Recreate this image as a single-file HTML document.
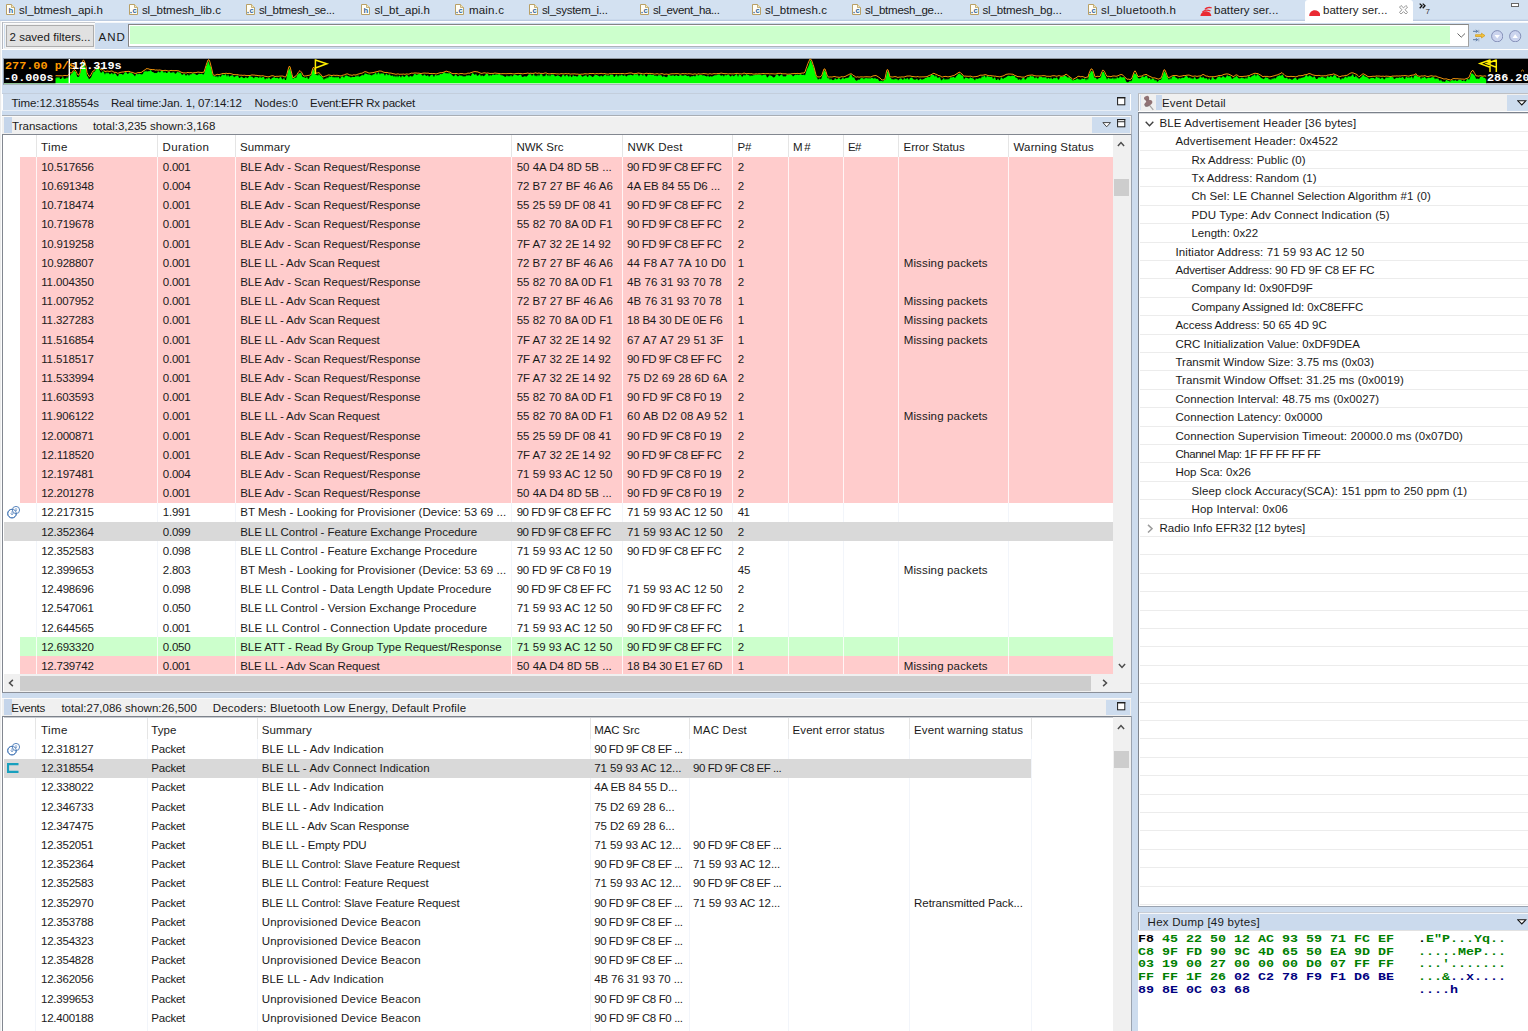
<!DOCTYPE html>
<html><head><meta charset="utf-8"><title>Network Analyzer</title>
<style>
*{box-sizing:border-box;margin:0;padding:0}
html,body{width:1528px;height:1031px;overflow:hidden;background:#cddcee}
body{position:relative;font-family:"Liberation Sans", sans-serif;font-size:11.5px;color:#1a1a1a;line-height:14px}
.a{position:absolute;white-space:nowrap}
.t{position:absolute;white-space:nowrap;height:14px;line-height:14px;letter-spacing:0px}
.row{position:absolute}
.hx{position:absolute;white-space:pre;font-family:"Liberation Mono",monospace;font-weight:bold;font-size:11.8px;line-height:13px;height:13px;transform-origin:0 0;transform:scaleX(1.13)}
.g{color:#008000}.b{color:#000080}.k{color:#000}
.cf{position:absolute;white-space:pre;font-family:"Liberation Mono",monospace;font-weight:bold;font-size:10.2px;line-height:10px;height:10px;transform-origin:0 0;transform:scaleX(1.16)}
</style></head><body>

<div class="a" style="left:0px;top:0px;width:1528px;height:22px;background:#d3e1f1;"></div>
<div class="a" style="left:0px;top:19px;width:1528px;height:1px;background:#cad9ec;"></div>
<div class="a" style="left:0px;top:20px;width:1528px;height:1px;background:#bccbe0;"></div>
<div class="a" style="left:1px;top:21px;width:1527px;height:1px;background:#ffffff;"></div>
<div class="a" style="left:95px;top:22px;width:1433px;height:1px;background:#f4f7fb;"></div>
<div class="a" style="left:1305px;top:0px;width:108px;height:22.5px;background:#ffffff;border-radius:3px 3px 0 0"></div>
<svg class="a" style="left:6.2px;top:4px" width="9" height="11" viewBox="0 0 9 11"><path d="M0.5 0.5H5.5L8.5 3.5V10.5H0.5Z" fill="#fffef6" stroke="#b9a066" stroke-width="1"/><path d="M5.5 0.5V3.5H8.5" fill="#f3e7b8" stroke="#b9a066" stroke-width="0.8"/><text x="2.6" y="9.2" font-family="Liberation Sans, sans-serif" font-size="7.6" font-weight="bold" fill="#2f64a0">h</text></svg>
<div class="t" style="left:18.9px;top:3.20px;letter-spacing:0.018px;">sl_btmesh_api.h</div>
<svg class="a" style="left:129px;top:4px" width="9" height="11" viewBox="0 0 9 11"><path d="M0.5 0.5H5.5L8.5 3.5V10.5H0.5Z" fill="#fffef6" stroke="#b9a066" stroke-width="1"/><path d="M5.5 0.5V3.5H8.5" fill="#f3e7b8" stroke="#b9a066" stroke-width="0.8"/><text x="3.6" y="9.2" font-family="Liberation Sans, sans-serif" font-size="7.6" font-weight="bold" fill="#2f64a0">c</text><rect x="1.4" y="7.9" width="1.3" height="1.3" fill="#2f64a0"/></svg>
<div class="t" style="left:141.9px;top:3.20px;letter-spacing:-0.019px;">sl_btmesh_lib.c</div>
<svg class="a" style="left:246px;top:4px" width="9" height="11" viewBox="0 0 9 11"><path d="M0.5 0.5H5.5L8.5 3.5V10.5H0.5Z" fill="#fffef6" stroke="#b9a066" stroke-width="1"/><path d="M5.5 0.5V3.5H8.5" fill="#f3e7b8" stroke="#b9a066" stroke-width="0.8"/><text x="3.6" y="9.2" font-family="Liberation Sans, sans-serif" font-size="7.6" font-weight="bold" fill="#2f64a0">c</text><rect x="1.4" y="7.9" width="1.3" height="1.3" fill="#2f64a0"/></svg>
<div class="t" style="left:258.9px;top:3.20px;letter-spacing:-0.325px;">sl_btmesh_se...</div>
<svg class="a" style="left:361px;top:4px" width="9" height="11" viewBox="0 0 9 11"><path d="M0.5 0.5H5.5L8.5 3.5V10.5H0.5Z" fill="#fffef6" stroke="#b9a066" stroke-width="1"/><path d="M5.5 0.5V3.5H8.5" fill="#f3e7b8" stroke="#b9a066" stroke-width="0.8"/><text x="2.6" y="9.2" font-family="Liberation Sans, sans-serif" font-size="7.6" font-weight="bold" fill="#2f64a0">h</text></svg>
<div class="t" style="left:374.4px;top:3.20px;letter-spacing:-0.013px;">sl_bt_api.h</div>
<svg class="a" style="left:455px;top:4px" width="9" height="11" viewBox="0 0 9 11"><path d="M0.5 0.5H5.5L8.5 3.5V10.5H0.5Z" fill="#fffef6" stroke="#b9a066" stroke-width="1"/><path d="M5.5 0.5V3.5H8.5" fill="#f3e7b8" stroke="#b9a066" stroke-width="0.8"/><text x="3.6" y="9.2" font-family="Liberation Sans, sans-serif" font-size="7.6" font-weight="bold" fill="#2f64a0">c</text><rect x="1.4" y="7.9" width="1.3" height="1.3" fill="#2f64a0"/></svg>
<div class="t" style="left:468.9px;top:3.20px;letter-spacing:0.225px;">main.c</div>
<svg class="a" style="left:529px;top:4px" width="9" height="11" viewBox="0 0 9 11"><path d="M0.5 0.5H5.5L8.5 3.5V10.5H0.5Z" fill="#fffef6" stroke="#b9a066" stroke-width="1"/><path d="M5.5 0.5V3.5H8.5" fill="#f3e7b8" stroke="#b9a066" stroke-width="0.8"/><text x="3.6" y="9.2" font-family="Liberation Sans, sans-serif" font-size="7.6" font-weight="bold" fill="#2f64a0">c</text><rect x="1.4" y="7.9" width="1.3" height="1.3" fill="#2f64a0"/></svg>
<div class="t" style="left:541.9px;top:3.20px;letter-spacing:-0.282px;">sl_system_i...</div>
<svg class="a" style="left:640px;top:4px" width="9" height="11" viewBox="0 0 9 11"><path d="M0.5 0.5H5.5L8.5 3.5V10.5H0.5Z" fill="#fffef6" stroke="#b9a066" stroke-width="1"/><path d="M5.5 0.5V3.5H8.5" fill="#f3e7b8" stroke="#b9a066" stroke-width="0.8"/><text x="3.6" y="9.2" font-family="Liberation Sans, sans-serif" font-size="7.6" font-weight="bold" fill="#2f64a0">c</text><rect x="1.4" y="7.9" width="1.3" height="1.3" fill="#2f64a0"/></svg>
<div class="t" style="left:652.9px;top:3.20px;letter-spacing:-0.355px;">sl_event_ha...</div>
<svg class="a" style="left:752px;top:4px" width="9" height="11" viewBox="0 0 9 11"><path d="M0.5 0.5H5.5L8.5 3.5V10.5H0.5Z" fill="#fffef6" stroke="#b9a066" stroke-width="1"/><path d="M5.5 0.5V3.5H8.5" fill="#f3e7b8" stroke="#b9a066" stroke-width="0.8"/><text x="3.6" y="9.2" font-family="Liberation Sans, sans-serif" font-size="7.6" font-weight="bold" fill="#2f64a0">c</text><rect x="1.4" y="7.9" width="1.3" height="1.3" fill="#2f64a0"/></svg>
<div class="t" style="left:764.9px;top:3.20px;letter-spacing:0.064px;">sl_btmesh.c</div>
<svg class="a" style="left:851.5px;top:4px" width="9" height="11" viewBox="0 0 9 11"><path d="M0.5 0.5H5.5L8.5 3.5V10.5H0.5Z" fill="#fffef6" stroke="#b9a066" stroke-width="1"/><path d="M5.5 0.5V3.5H8.5" fill="#f3e7b8" stroke="#b9a066" stroke-width="0.8"/><text x="3.6" y="9.2" font-family="Liberation Sans, sans-serif" font-size="7.6" font-weight="bold" fill="#2f64a0">c</text><rect x="1.4" y="7.9" width="1.3" height="1.3" fill="#2f64a0"/></svg>
<div class="t" style="left:864.9px;top:3.20px;letter-spacing:-0.228px;">sl_btmesh_ge...</div>
<svg class="a" style="left:969.5px;top:4px" width="9" height="11" viewBox="0 0 9 11"><path d="M0.5 0.5H5.5L8.5 3.5V10.5H0.5Z" fill="#fffef6" stroke="#b9a066" stroke-width="1"/><path d="M5.5 0.5V3.5H8.5" fill="#f3e7b8" stroke="#b9a066" stroke-width="0.8"/><text x="3.6" y="9.2" font-family="Liberation Sans, sans-serif" font-size="7.6" font-weight="bold" fill="#2f64a0">c</text><rect x="1.4" y="7.9" width="1.3" height="1.3" fill="#2f64a0"/></svg>
<div class="t" style="left:982.4px;top:3.20px;letter-spacing:-0.121px;">sl_btmesh_bg...</div>
<svg class="a" style="left:1087.5px;top:4px" width="9" height="11" viewBox="0 0 9 11"><path d="M0.5 0.5H5.5L8.5 3.5V10.5H0.5Z" fill="#fffef6" stroke="#b9a066" stroke-width="1"/><path d="M5.5 0.5V3.5H8.5" fill="#f3e7b8" stroke="#b9a066" stroke-width="0.8"/><text x="3.6" y="9.2" font-family="Liberation Sans, sans-serif" font-size="7.6" font-weight="bold" fill="#2f64a0">c</text><rect x="1.4" y="7.9" width="1.3" height="1.3" fill="#2f64a0"/></svg>
<div class="t" style="left:1100.9px;top:3.20px;letter-spacing:0.260px;">sl_bluetooth.h</div>
<svg class="a" style="left:1199.6px;top:5.8px" width="12.4" height="10" viewBox="0 0 12.4 10"><path d="M0.3 9.9C1 6.6 3.4 5.1 6.4 5.3 9 5.5 10.9 7.1 11.4 9.9Z" fill="#ea2a33"/><path d="M1.8 5.9C4 3.2 7.6 2.6 10.8 4.5L10.2 5.6C7.6 4.2 5 4.5 2.9 6.4Z" fill="#ea2a33"/><path d="M4.4 3C6.4 0.8 9.6 0.3 12 1.5L11.4 2.6C9.2 1.8 6.9 2.2 5.3 3.8Z" fill="#ea2a33"/></svg>
<div class="t" style="left:1213.9px;top:3.20px;letter-spacing:0.094px;">battery ser...</div>
<svg class="a" style="left:1308.6px;top:9.7px" width="11.6" height="6" viewBox="0 0 11.6 6"><path d="M0.2 5.9C0.3 2.6 2.6 0.3 5.8 0.3 9 0.3 11.3 2.6 11.4 5.9Z" fill="#ea2a33"/></svg>
<div class="t" style="left:1322.9px;top:3.20px;letter-spacing:0.094px;">battery ser...</div>
<svg class="a" style="left:1398.5px;top:5px" width="9" height="9.5" viewBox="0 0 9 9.5"><path d="M0.5 2.1L2.1 0.5 4.5 2.9 6.9 0.5 8.5 2.1 6.1 4.75 8.5 7.4 6.9 9 4.5 6.6 2.1 9 0.5 7.4 2.9 4.75Z" fill="#fff" stroke="#8a8a8a" stroke-width="0.9" stroke-linejoin="round"/></svg>
<svg class="a" style="left:1419px;top:2.5px" width="8" height="6" viewBox="0 0 8 6"><path d="M0.7 0.6L3 2.8 0.7 5.2M3.7 0.6L6 2.8 3.7 5.2" fill="none" stroke="#111" stroke-width="1.3"/></svg>
<div class="a" style="left:1425.6px;top:7px;font-size:8px;line-height:9px;color:#333">7</div>
<div class="a" style="left:1511px;top:3px;width:8px;height:3.6px;border:1px solid #666;background:#fff"></div>
<div class="a" style="left:0px;top:21px;width:1px;height:1010px;background:#ebebeb;"></div>
<div class="a" style="left:1px;top:21px;width:1px;height:1010px;background:#fbfcfd;"></div>
<div class="a" style="left:2px;top:23px;width:1526px;height:26px;background:#cddcee;"></div>
<div class="a" style="left:2px;top:49px;width:1526px;height:1px;background:#fff;"></div>
<div class="a" style="left:2px;top:22px;width:93px;height:27px;background:#f2f2f2;"></div>
<div class="a" style="left:2px;top:22px;width:93px;height:1px;background:#c6c9cf;"></div>
<div class="a" style="left:2px;top:22px;width:1px;height:27px;background:#b4b8c0;"></div>
<div class="a" style="left:3px;top:23px;width:92px;height:1px;background:#fbfbfb;"></div>
<div class="a" style="left:3px;top:23px;width:1px;height:26px;background:#fbfbfb;"></div>
<div class="a" style="left:4px;top:24px;width:1px;height:24px;background:#d0dff0;"></div>
<div class="a" style="left:6px;top:25px;width:88px;height:22px;background:#e1e1e1;border:1px solid #adadad"></div>
<div class="t" style="left:9.5px;top:29.60px;letter-spacing:0.027px;">2 saved filters...</div>
<div class="t" style="left:98.5px;top:29.60px;letter-spacing:0.959px;">AND</div>
<div class="a" style="left:128px;top:23.5px;width:1341px;height:23px;background:#fff;border:1px solid #858585;border-right-color:#a0a0a0;border-bottom-color:#adb3bb"></div>
<div class="a" style="left:130px;top:26.3px;width:1320px;height:17.6px;background:#ccffcc;"></div>
<svg class="a" style="left:1456.5px;top:33px" width="8.5" height="5" viewBox="0 0 8.5 5"><path d="M0.5 0.5L4.25 4.2 8 0.5" fill="none" stroke="#555" stroke-width="0.9"/></svg>
<svg class="a" style="left:1472px;top:29px" width="14" height="14" viewBox="0 0 14 14"><path d="M1 2.3H5.5M4 0.8L5.5 2.3 4 3.8M1 10.7H5.5M4 9.2L5.5 10.7 4 12.2" stroke="#4a6a9a" stroke-width="0.9" fill="none"/><path d="M6.8 0.8V4M6.8 9V12.4" stroke="#9aa8c0" stroke-width="1"/><path d="M3.5 5.7H9.5V4.2L13 6.6 9.5 9V7.5H3.5Z" fill="#f6c23a" stroke="#d09a18" stroke-width="0.7"/></svg>
<svg class="a" style="left:1491px;top:29.7px" width="12.4" height="12.4" viewBox="0 0 12.4 12.4"><circle cx="6.2" cy="6.2" r="5.6" fill="#cbd4ee" stroke="#8590b8" stroke-width="1"/><path d="M3.5 4.9H8.9L6.2 8.6Z" fill="#fff"/></svg>
<svg class="a" style="left:1509.2px;top:29.7px" width="12.4" height="12.4" viewBox="0 0 12.4 12.4"><circle cx="6.2" cy="6.2" r="5.6" fill="#cbd4ee" stroke="#8590b8" stroke-width="1"/><path d="M3.5 7.9H8.9L6.2 4.2Z" fill="#fff"/></svg>
<div class="a" style="left:3px;top:58px;width:1525px;height:27px;background:#000;border:1px solid #8f98a3;border-right:none;border-bottom:1px solid #a9b1bb"></div>
<div class="a" style="left:4px;top:83.2px;width:1524px;height:0.9px;background:#eef2f7"></div>
<svg class="a" style="left:0;top:0" width="1528" height="90" viewBox="0 0 1528 90">
<path d="M4 83.2 L4 77.9 L5 77.6 L6 78.0 L7 77.7 L8 78.7 L9 77.1 L10 78.7 L11 76.5 L12 79.3 L13 77.9 L14 76.4 L15 76.4 L16 76.8 L17 77.4 L18 78.7 L19 77.9 L20 78.0 L21 76.8 L22 79.2 L23 78.1 L24 76.6 L25 76.3 L26 77.0 L27 76.9 L28 78.5 L29 76.5 L30 77.1 L31 76.9 L32 77.6 L33 76.5 L34 76.7 L35 78.0 L36 76.4 L37 76.0 L38 76.2 L39 76.9 L40 77.8 L41 77.5 L42 76.8 L43 76.4 L44 78.2 L45 78.5 L46 76.8 L47 77.7 L48 79.0 L49 76.5 L50 76.7 L51 76.2 L52 77.6 L53 77.7 L54 77.2 L55 77.3 L56 78.7 L57 76.5 L58 78.5 L59 76.6 L60 79.1 L61 79.1 L62 77.9 L63 76.5 L64 79.3 L65 78.3 L66 78.7 L67 77.0 L68 78.4 L69 75.4 L70 76.0 L71 74.0 L72 73.4 L73 72.1 L74 70.5 L75 71.6 L76 72.1 L77 76.6 L78 76.9 L79 76.7 L80 73.7 L81 70.5 L82 67.0 L83 62.8 L84 63.1 L85 67.1 L86 68.8 L87 75.8 L88 76.9 L89 79.3 L90 78.4 L91 77.4 L92 75.2 L93 72.6 L94 71.9 L95 71.2 L96 69.3 L97 68.6 L98 66.6 L99 68.6 L100 71.3 L101 72.9 L102 72.3 L103 70.7 L104 72.4 L105 74.7 L106 72.0 L107 73.7 L108 72.2 L109 73.6 L110 74.4 L111 73.5 L112 72.7 L113 74.8 L114 73.2 L115 73.3 L116 74.2 L117 75.8 L118 76.5 L119 73.7 L120 73.8 L121 73.9 L122 74.0 L123 75.0 L124 73.4 L125 72.2 L126 72.0 L127 73.2 L128 74.2 L129 72.5 L130 72.5 L131 73.2 L132 73.0 L133 74.2 L134 75.1 L135 76.5 L136 73.9 L137 73.8 L138 74.4 L139 73.6 L140 73.9 L141 74.3 L142 74.4 L143 73.7 L144 70.9 L145 72.0 L146 70.3 L147 72.0 L148 70.8 L149 71.6 L150 70.5 L151 70.0 L152 72.1 L153 71.9 L154 72.8 L155 73.2 L156 72.7 L157 73.2 L158 71.3 L159 71.7 L160 72.8 L161 70.9 L162 71.0 L163 71.2 L164 73.2 L165 71.3 L166 73.0 L167 72.9 L168 72.2 L169 71.2 L170 72.3 L171 73.0 L172 72.3 L173 72.4 L174 71.9 L175 73.7 L176 73.5 L177 72.3 L178 71.4 L179 72.7 L180 72.0 L181 73.6 L182 75.1 L183 74.4 L184 73.4 L185 74.2 L186 76.0 L187 74.4 L188 74.2 L189 75.9 L190 73.9 L191 74.8 L192 73.4 L193 73.3 L194 73.6 L195 73.8 L196 74.7 L197 75.1 L198 74.4 L199 73.5 L200 74.1 L201 74.0 L202 73.4 L203 74.7 L204 73.9 L205 70.7 L206 66.2 L207 65.0 L208 60.7 L209 62.8 L210 65.9 L211 66.7 L212 72.6 L213 75.5 L214 76.6 L215 75.7 L216 77.2 L217 75.5 L218 77.7 L219 75.0 L220 76.7 L221 76.4 L222 74.5 L223 74.4 L224 75.4 L225 74.3 L226 74.3 L227 76.9 L228 73.9 L229 76.8 L230 76.3 L231 75.5 L232 75.6 L233 74.9 L234 77.5 L235 76.3 L236 76.2 L237 75.6 L238 75.4 L239 77.7 L240 77.9 L241 76.4 L242 76.7 L243 77.8 L244 78.3 L245 77.8 L246 76.6 L247 78.2 L248 77.8 L249 76.6 L250 75.8 L251 76.8 L252 76.5 L253 77.4 L254 78.6 L255 76.5 L256 77.2 L257 76.7 L258 77.5 L259 77.9 L260 75.9 L261 78.1 L262 77.3 L263 77.0 L264 77.1 L265 79.8 L266 78.3 L267 78.4 L268 78.5 L269 76.9 L270 78.7 L271 79.4 L272 77.8 L273 77.9 L274 76.8 L275 77.7 L276 78.3 L277 77.4 L278 78.2 L279 78.8 L280 76.9 L281 77.0 L282 79.0 L283 79.6 L284 77.2 L285 80.0 L286 80.0 L287 75.4 L288 70.7 L289 69.7 L290 68.0 L291 72.7 L292 74.9 L293 79.3 L294 77.7 L295 77.3 L296 78.2 L297 75.6 L298 74.2 L299 73.0 L300 73.5 L301 72.2 L302 76.1 L303 77.2 L304 77.1 L305 77.8 L306 77.9 L307 76.4 L308 78.9 L309 78.4 L310 75.8 L311 76.3 L312 71.7 L313 68.4 L314 70.0 L315 72.7 L316 75.2 L317 74.5 L318 75.9 L319 73.5 L320 75.8 L321 75.6 L322 76.8 L323 78.0 L324 80.0 L325 78.0 L326 79.1 L327 76.9 L328 78.4 L329 76.0 L330 77.0 L331 76.5 L332 76.1 L333 77.7 L334 76.6 L335 77.9 L336 76.3 L337 78.0 L338 76.3 L339 77.5 L340 79.0 L341 76.9 L342 76.3 L343 76.3 L344 77.9 L345 75.8 L346 75.6 L347 75.4 L348 76.2 L349 76.4 L350 76.7 L351 77.7 L352 76.4 L353 76.9 L354 76.9 L355 77.0 L356 75.2 L357 77.1 L358 74.8 L359 77.2 L360 76.0 L361 76.2 L362 74.4 L363 75.5 L364 74.9 L365 72.9 L366 73.9 L367 73.8 L368 74.8 L369 74.2 L370 74.8 L371 75.2 L372 75.4 L373 74.3 L374 74.4 L375 73.3 L376 72.4 L377 75.0 L378 72.2 L379 72.7 L380 74.7 L381 72.7 L382 74.1 L383 73.0 L384 74.0 L385 75.9 L386 73.6 L387 73.9 L388 75.6 L389 74.2 L390 74.5 L391 76.1 L392 75.5 L393 75.4 L394 77.0 L395 75.3 L396 77.5 L397 75.0 L398 77.5 L399 75.5 L400 76.0 L401 77.8 L402 75.3 L403 76.0 L404 77.1 L405 76.5 L406 75.1 L407 75.2 L408 75.8 L409 77.4 L410 75.6 L411 76.3 L412 76.4 L413 76.2 L414 74.3 L415 73.8 L416 74.6 L417 74.9 L418 73.9 L419 74.3 L420 73.6 L421 73.9 L422 74.9 L423 76.1 L424 74.5 L425 74.6 L426 75.9 L427 75.8 L428 74.9 L429 77.0 L430 75.8 L431 75.0 L432 74.6 L433 75.3 L434 77.3 L435 74.7 L436 74.9 L437 75.7 L438 74.8 L439 75.5 L440 73.9 L441 73.9 L442 74.3 L443 73.3 L444 72.5 L445 72.2 L446 73.7 L447 72.7 L448 73.8 L449 73.1 L450 73.3 L451 73.7 L452 74.9 L453 75.7 L454 76.4 L455 74.8 L456 74.2 L457 76.1 L458 76.4 L459 75.8 L460 75.0 L461 76.1 L462 75.2 L463 76.7 L464 76.1 L465 76.7 L466 75.7 L467 75.3 L468 75.8 L469 74.9 L470 75.8 L471 76.0 L472 73.3 L473 73.2 L474 74.3 L475 75.0 L476 73.6 L477 75.7 L478 75.7 L479 74.7 L480 74.1 L481 76.6 L482 75.1 L483 76.0 L484 76.3 L485 75.1 L486 74.0 L487 73.8 L488 74.0 L489 76.5 L490 74.4 L491 75.8 L492 75.3 L493 73.9 L494 74.9 L495 74.7 L496 74.2 L497 74.4 L498 74.6 L499 74.0 L500 74.2 L501 75.5 L502 74.9 L503 75.8 L504 76.1 L505 77.1 L506 76.5 L507 75.0 L508 76.7 L509 75.4 L510 76.8 L511 74.2 L512 76.8 L513 75.7 L514 74.8 L515 74.3 L516 75.2 L517 75.1 L518 76.1 L519 74.7 L520 75.1 L521 74.3 L522 77.1 L523 76.7 L524 76.4 L525 76.1 L526 76.7 L527 76.3 L528 75.3 L529 74.0 L530 74.6 L531 74.0 L532 76.2 L533 74.6 L534 73.9 L535 76.4 L536 75.0 L537 76.7 L538 74.1 L539 76.4 L540 74.0 L541 74.4 L542 74.0 L543 76.8 L544 75.4 L545 76.4 L546 74.1 L547 74.6 L548 76.5 L549 74.2 L550 76.8 L551 74.2 L552 74.8 L553 74.5 L554 74.7 L555 76.5 L556 76.0 L557 75.8 L558 75.0 L559 76.2 L560 76.1 L561 77.4 L562 75.7 L563 74.5 L564 75.0 L565 76.7 L566 75.0 L567 74.9 L568 75.8 L569 77.1 L570 74.5 L571 76.5 L572 77.2 L573 74.8 L574 76.1 L575 76.2 L576 75.7 L577 76.9 L578 75.7 L579 74.8 L580 74.7 L581 74.9 L582 76.6 L583 76.7 L584 75.6 L585 75.9 L586 74.5 L587 76.4 L588 77.0 L589 74.7 L590 75.6 L591 75.5 L592 76.7 L593 77.1 L594 75.8 L595 74.9 L596 75.1 L597 75.1 L598 75.7 L599 75.9 L600 76.8 L601 74.9 L602 76.3 L603 76.6 L604 75.3 L605 74.8 L606 74.4 L607 76.4 L608 74.6 L609 76.4 L610 74.8 L611 74.5 L612 74.9 L613 74.4 L614 77.3 L615 76.2 L616 74.7 L617 74.7 L618 77.0 L619 74.9 L620 75.7 L621 75.0 L622 74.2 L623 76.0 L624 75.6 L625 75.1 L626 76.5 L627 76.2 L628 74.8 L629 75.4 L630 74.4 L631 75.1 L632 75.0 L633 75.8 L634 74.3 L635 74.1 L636 74.7 L637 74.0 L638 74.4 L639 76.6 L640 74.4 L641 74.2 L642 74.7 L643 75.9 L644 74.1 L645 74.9 L646 76.7 L647 76.3 L648 74.3 L649 74.7 L650 74.5 L651 74.4 L652 75.3 L653 74.6 L654 74.9 L655 76.2 L656 74.9 L657 76.4 L658 75.4 L659 75.0 L660 75.4 L661 74.7 L662 76.3 L663 76.9 L664 75.2 L665 77.3 L666 76.5 L667 77.5 L668 75.1 L669 74.8 L670 75.5 L671 75.4 L672 75.8 L673 74.9 L674 75.7 L675 76.3 L676 74.7 L677 75.5 L678 76.0 L679 75.9 L680 74.6 L681 75.3 L682 75.4 L683 75.7 L684 75.6 L685 75.0 L686 75.3 L687 75.9 L688 76.3 L689 75.6 L690 77.4 L691 75.9 L692 76.6 L693 76.1 L694 75.4 L695 76.8 L696 75.3 L697 74.5 L698 75.7 L699 75.2 L700 74.7 L701 74.9 L702 74.9 L703 75.7 L704 74.9 L705 76.1 L706 76.0 L707 76.7 L708 75.1 L709 76.9 L710 76.3 L711 76.2 L712 76.7 L713 75.9 L714 75.7 L715 74.9 L716 75.6 L717 74.8 L718 74.6 L719 74.5 L720 74.4 L721 76.1 L722 75.3 L723 75.3 L724 76.7 L725 74.3 L726 75.4 L727 75.0 L728 74.7 L729 74.8 L730 76.2 L731 76.5 L732 75.1 L733 75.7 L734 76.4 L735 74.9 L736 74.5 L737 74.1 L738 76.9 L739 74.3 L740 75.0 L741 74.9 L742 77.1 L743 76.0 L744 74.2 L745 76.1 L746 74.3 L747 74.2 L748 75.3 L749 74.8 L750 76.6 L751 75.1 L752 76.3 L753 75.1 L754 75.6 L755 74.5 L756 74.4 L757 74.8 L758 74.5 L759 74.4 L760 74.6 L761 74.9 L762 75.5 L763 74.9 L764 74.5 L765 75.0 L766 74.7 L767 77.4 L768 76.9 L769 75.4 L770 75.3 L771 75.8 L772 76.0 L773 77.2 L774 77.4 L775 76.7 L776 74.7 L777 74.6 L778 74.4 L779 76.4 L780 75.5 L781 74.7 L782 74.3 L783 76.5 L784 76.2 L785 76.5 L786 76.3 L787 74.3 L788 75.0 L789 74.6 L790 74.2 L791 74.5 L792 74.9 L793 76.4 L794 75.7 L795 74.6 L796 74.7 L797 74.7 L798 74.4 L799 75.3 L800 74.3 L801 74.2 L802 74.9 L803 75.1 L804 74.6 L805 75.5 L806 72.3 L807 69.0 L808 67.3 L809 64.8 L810 60.8 L811 60.2 L812 63.8 L813 65.4 L814 68.6 L815 71.6 L816 76.1 L817 77.5 L818 79.7 L819 78.8 L820 78.6 L821 79.5 L822 76.4 L823 73.1 L824 69.9 L825 70.9 L826 72.2 L827 76.4 L828 78.7 L829 77.5 L830 80.3 L831 77.9 L832 80.3 L833 79.8 L834 80.3 L835 77.7 L836 78.9 L837 79.6 L838 78.5 L839 77.4 L840 79.2 L841 79.5 L842 78.6 L843 77.6 L844 78.9 L845 78.6 L846 77.8 L847 78.3 L848 77.6 L849 77.5 L850 74.5 L851 74.5 L852 75.7 L853 78.1 L854 76.8 L855 79.6 L856 80.5 L857 80.8 L858 79.4 L859 79.7 L860 79.4 L861 77.7 L862 78.2 L863 78.1 L864 79.4 L865 77.7 L866 78.5 L867 77.6 L868 78.9 L869 77.6 L870 79.1 L871 77.8 L872 77.8 L873 78.3 L874 78.8 L875 77.4 L876 79.0 L877 78.7 L878 79.0 L879 80.7 L880 81.3 L881 80.6 L882 81.1 L883 81.6 L884 80.1 L885 79.9 L886 77.1 L887 72.2 L888 70.8 L889 73.8 L890 77.7 L891 78.0 L892 79.8 L893 78.7 L894 80.1 L895 78.3 L896 79.5 L897 78.4 L898 80.6 L899 79.4 L900 78.6 L901 78.3 L902 79.0 L903 80.2 L904 77.9 L905 78.5 L906 79.6 L907 77.7 L908 78.5 L909 79.9 L910 77.7 L911 77.9 L912 77.3 L913 78.9 L914 79.4 L915 79.7 L916 79.6 L917 78.6 L918 80.0 L919 80.2 L920 78.4 L921 79.0 L922 79.9 L923 79.0 L924 79.2 L925 78.0 L926 78.0 L927 77.5 L928 76.8 L929 77.3 L930 76.9 L931 75.3 L932 74.6 L933 74.9 L934 75.1 L935 77.0 L936 74.7 L937 77.6 L938 77.8 L939 77.6 L940 77.0 L941 80.3 L942 80.3 L943 78.7 L944 78.1 L945 80.2 L946 78.6 L947 79.9 L948 78.6 L949 79.7 L950 77.6 L951 77.2 L952 77.5 L953 77.1 L954 77.1 L955 78.2 L956 76.4 L957 75.4 L958 74.0 L959 73.8 L960 73.4 L961 75.0 L962 75.6 L963 75.7 L964 79.4 L965 78.1 L966 77.3 L967 78.3 L968 78.1 L969 79.0 L970 77.2 L971 77.7 L972 78.2 L973 78.2 L974 79.2 L975 80.4 L976 77.9 L977 79.3 L978 78.4 L979 78.6 L980 77.8 L981 78.7 L982 75.8 L983 77.5 L984 75.3 L985 75.9 L986 78.0 L987 75.4 L988 76.6 L989 76.7 L990 77.1 L991 77.0 L992 76.6 L993 79.0 L994 78.1 L995 77.1 L996 79.9 L997 79.9 L998 78.3 L999 79.9 L1000 80.2 L1001 77.3 L1002 77.7 L1003 79.2 L1004 77.9 L1005 77.8 L1006 77.3 L1007 76.6 L1008 75.8 L1009 75.7 L1010 76.1 L1011 76.2 L1012 75.4 L1013 75.7 L1014 75.8 L1015 76.2 L1016 78.3 L1017 77.4 L1018 79.8 L1019 79.4 L1020 79.0 L1021 80.4 L1022 78.5 L1023 77.9 L1024 77.6 L1025 79.9 L1026 78.9 L1027 77.9 L1028 76.4 L1029 77.8 L1030 75.4 L1031 75.8 L1032 76.8 L1033 75.8 L1034 77.2 L1035 78.6 L1036 76.8 L1037 78.1 L1038 78.8 L1039 76.9 L1040 76.6 L1041 77.0 L1042 77.0 L1043 77.7 L1044 77.1 L1045 77.8 L1046 76.8 L1047 79.0 L1048 77.9 L1049 77.8 L1050 79.3 L1051 77.1 L1052 79.3 L1053 78.7 L1054 77.6 L1055 78.5 L1056 77.8 L1057 77.3 L1058 79.4 L1059 79.4 L1060 76.7 L1061 76.7 L1062 76.8 L1063 76.7 L1064 75.8 L1065 75.3 L1066 76.2 L1067 76.8 L1068 78.0 L1069 76.7 L1070 77.7 L1071 79.0 L1072 79.4 L1073 80.8 L1074 79.4 L1075 80.1 L1076 79.6 L1077 78.3 L1078 79.0 L1079 79.5 L1080 79.5 L1081 79.7 L1082 78.3 L1083 79.1 L1084 79.0 L1085 77.8 L1086 80.7 L1087 78.0 L1088 80.3 L1089 74.3 L1090 73.4 L1091 70.8 L1092 71.6 L1093 71.6 L1094 77.1 L1095 77.9 L1096 78.0 L1097 79.4 L1098 78.7 L1099 77.9 L1100 78.0 L1101 77.1 L1102 72.7 L1103 72.0 L1104 72.1 L1105 75.0 L1106 76.8 L1107 79.8 L1108 77.7 L1109 77.9 L1110 78.9 L1111 78.3 L1112 79.0 L1113 77.3 L1114 79.8 L1115 77.5 L1116 79.6 L1117 76.8 L1118 78.3 L1119 78.0 L1120 76.0 L1121 77.1 L1122 77.6 L1123 77.3 L1124 77.1 L1125 78.1 L1126 81.2 L1127 82.2 L1128 82.2 L1129 81.8 L1130 80.4 L1131 81.5 L1132 80.1 L1133 76.0 L1134 72.7 L1135 74.2 L1136 73.5 L1137 75.4 L1138 77.9 L1139 78.5 L1140 78.3 L1141 77.8 L1142 76.4 L1143 76.0 L1144 77.6 L1145 76.4 L1146 75.5 L1147 75.9 L1148 78.8 L1149 77.9 L1150 77.9 L1151 80.2 L1152 77.9 L1153 79.1 L1154 78.8 L1155 80.9 L1156 79.2 L1157 81.8 L1158 81.6 L1159 80.0 L1160 80.0 L1161 79.7 L1162 77.2 L1163 74.7 L1164 71.2 L1165 71.9 L1166 74.1 L1167 76.3 L1168 78.1 L1169 79.9 L1170 77.4 L1171 79.8 L1172 76.8 L1173 76.6 L1174 76.1 L1175 76.4 L1176 77.9 L1177 77.8 L1178 79.4 L1179 77.8 L1180 78.4 L1181 78.4 L1182 77.8 L1183 77.7 L1184 77.9 L1185 76.6 L1186 75.9 L1187 75.9 L1188 77.5 L1189 78.2 L1190 76.9 L1191 79.1 L1192 77.7 L1193 79.4 L1194 77.6 L1195 77.1 L1196 78.9 L1197 79.2 L1198 78.6 L1199 78.5 L1200 76.5 L1201 76.5 L1202 78.3 L1203 76.5 L1204 77.8 L1205 78.7 L1206 78.0 L1207 78.5 L1208 80.1 L1209 78.1 L1210 79.2 L1211 80.2 L1212 77.3 L1213 77.1 L1214 79.0 L1215 79.3 L1216 79.4 L1217 77.7 L1218 77.1 L1219 76.6 L1220 76.6 L1221 78.0 L1222 76.9 L1223 75.9 L1224 76.8 L1225 77.7 L1226 77.3 L1227 74.9 L1228 75.7 L1229 76.5 L1230 75.6 L1231 76.9 L1232 79.0 L1233 78.4 L1234 77.2 L1235 77.6 L1236 76.3 L1237 76.1 L1238 77.7 L1239 78.5 L1240 78.2 L1241 78.2 L1242 77.2 L1243 78.6 L1244 78.1 L1245 79.3 L1246 76.9 L1247 79.3 L1248 76.5 L1249 76.1 L1250 77.2 L1251 77.2 L1252 75.4 L1253 75.9 L1254 74.7 L1255 73.9 L1256 76.7 L1257 74.0 L1258 74.8 L1259 75.8 L1260 76.4 L1261 78.1 L1262 78.3 L1263 78.8 L1264 79.2 L1265 77.4 L1266 77.3 L1267 78.1 L1268 77.4 L1269 79.7 L1270 78.7 L1271 80.2 L1272 77.9 L1273 79.4 L1274 77.5 L1275 78.8 L1276 78.1 L1277 76.6 L1278 76.2 L1279 75.4 L1280 75.2 L1281 75.9 L1282 74.4 L1283 75.1 L1284 77.5 L1285 77.9 L1286 78.3 L1287 77.2 L1288 79.6 L1289 78.6 L1290 78.7 L1291 79.2 L1292 80.1 L1293 79.2 L1294 78.3 L1295 78.0 L1296 77.7 L1297 80.1 L1298 79.5 L1299 78.1 L1300 78.8 L1301 77.7 L1302 78.1 L1303 77.3 L1304 77.4 L1305 76.5 L1306 75.1 L1307 75.3 L1308 77.1 L1309 75.4 L1310 75.5 L1311 76.3 L1312 76.8 L1313 77.7 L1314 76.1 L1315 77.0 L1316 79.0 L1317 78.9 L1318 78.2 L1319 76.8 L1320 78.1 L1321 77.1 L1322 77.1 L1323 76.5 L1324 78.2 L1325 77.2 L1326 79.1 L1327 76.4 L1328 76.0 L1329 77.6 L1330 76.5 L1331 75.2 L1332 77.3 L1333 76.5 L1334 75.1 L1335 75.2 L1336 76.0 L1337 78.1 L1338 77.8 L1339 77.2 L1340 78.8 L1341 79.9 L1342 77.8 L1343 78.9 L1344 78.1 L1345 76.9 L1346 76.3 L1347 78.2 L1348 76.0 L1349 76.7 L1350 76.2 L1351 76.4 L1352 75.0 L1353 73.9 L1354 77.1 L1355 76.9 L1356 75.1 L1357 77.7 L1358 77.2 L1359 79.3 L1360 77.8 L1361 77.4 L1362 76.0 L1363 75.1 L1364 75.1 L1365 77.0 L1366 76.2 L1367 77.6 L1368 77.6 L1369 79.0 L1370 78.6 L1371 78.0 L1372 77.7 L1373 77.9 L1374 78.0 L1375 79.3 L1376 76.7 L1377 76.7 L1378 78.2 L1379 76.9 L1380 78.9 L1381 78.4 L1382 77.6 L1383 77.9 L1384 79.6 L1385 78.9 L1386 77.0 L1387 77.9 L1388 77.2 L1389 77.8 L1390 76.7 L1391 76.6 L1392 77.4 L1393 76.7 L1394 79.3 L1395 78.7 L1396 78.0 L1397 77.6 L1398 78.3 L1399 77.6 L1400 77.3 L1401 78.2 L1402 76.9 L1403 76.9 L1404 78.6 L1405 79.3 L1406 76.6 L1407 76.9 L1408 78.3 L1409 76.4 L1410 78.5 L1411 76.6 L1412 76.5 L1413 78.9 L1414 76.2 L1415 75.1 L1416 75.6 L1417 75.8 L1418 76.9 L1419 76.9 L1420 76.8 L1421 79.4 L1422 77.1 L1423 78.3 L1424 76.9 L1425 77.1 L1426 78.4 L1427 78.4 L1428 77.4 L1429 77.8 L1430 77.8 L1431 77.9 L1432 76.7 L1433 77.5 L1434 77.0 L1435 79.4 L1436 77.9 L1437 79.3 L1438 78.1 L1439 80.1 L1440 81.1 L1441 79.4 L1442 81.6 L1443 81.4 L1444 81.5 L1445 82.0 L1446 80.1 L1447 80.1 L1448 81.0 L1449 80.4 L1450 82.0 L1451 80.2 L1452 80.4 L1453 79.7 L1454 81.2 L1455 79.8 L1456 80.4 L1457 81.0 L1458 80.4 L1459 79.6 L1460 79.9 L1461 79.6 L1462 81.0 L1463 80.9 L1464 79.8 L1465 81.5 L1466 81.1 L1467 78.9 L1468 79.0 L1469 80.0 L1470 77.8 L1471 73.7 L1472 73.3 L1473 74.1 L1474 75.1 L1475 75.9 L1476 78.8 L1477 78.7 L1478 78.6 L1479 79.2 L1480 77.2 L1481 76.6 L1482 76.6 L1483 77.1 L1484 78.1 L1485 77.7 L1486 79.7 L1487 77.5 L1487 83.2 Z" fill="#00ff00"/>
<path d="M4 76.0 L5 76.3 L6 76.1 L7 75.8 L8 75.9 L9 75.6 L10 75.4 L11 75.8 L12 76.2 L13 76.1 L14 75.7 L15 75.7 L16 75.5 L17 75.3 L18 75.4 L19 75.6 L20 75.6 L21 75.6 L22 76.0 L23 76.1 L24 75.7 L25 75.5 L26 75.7 L27 75.9 L28 76.0 L29 75.4 L30 75.7 L31 76.0 L32 75.4 L33 75.6 L34 75.2 L35 75.6 L36 75.2 L37 75.0 L38 75.4 L39 75.4 L40 75.1 L41 74.9 L42 74.9 L43 74.9 L44 75.5 L45 75.3 L46 75.2 L47 75.6 L48 75.2 L49 75.2 L50 75.6 L51 75.4 L52 75.2 L53 75.2 L54 75.3 L55 75.8 L56 75.8 L57 75.5 L58 75.9 L59 75.6 L60 75.9 L61 75.6 L62 76.0 L63 75.8 L64 75.5 L65 75.5 L66 75.5 L67 75.8 L68 75.6 L69 74.0 L70 72.8 L71 72.9 L72 72.8 L73 70.8 L74 69.7 L75 69.9 L76 71.2 L77 73.3 L78 75.0 L79 74.9 L80 72.9 L81 66.8 L82 63.5 L83 60.2 L84 60.4 L85 63.2 L86 66.5 L87 72.5 L88 74.6 L89 76.4 L90 76.1 L91 74.6 L92 72.6 L93 70.9 L94 70.8 L95 69.3 L96 66.9 L97 65.8 L98 65.5 L99 67.0 L100 68.5 L101 70.0 L102 69.8 L103 69.4 L104 70.7 L105 71.6 L106 71.3 L107 71.2 L108 71.0 L109 71.5 L110 71.3 L111 71.1 L112 70.9 L113 71.6 L114 72.2 L115 72.4 L116 72.3 L117 73.0 L118 73.3 L119 72.8 L120 72.6 L121 72.2 L122 72.2 L123 71.9 L124 72.1 L125 71.4 L126 71.6 L127 71.5 L128 71.4 L129 71.3 L130 71.7 L131 72.3 L132 72.2 L133 72.6 L134 73.0 L135 73.4 L136 73.3 L137 73.0 L138 72.5 L139 72.7 L140 72.4 L141 72.6 L142 71.9 L143 71.0 L144 70.5 L145 69.9 L146 68.7 L147 68.8 L148 68.7 L149 69.1 L150 69.4 L151 69.4 L152 69.6 L153 69.7 L154 69.5 L155 70.1 L156 70.1 L157 69.9 L158 70.3 L159 69.9 L160 70.1 L161 70.2 L162 70.5 L163 70.7 L164 70.5 L165 70.3 L166 70.4 L167 70.7 L168 70.9 L169 71.1 L170 70.6 L171 70.4 L172 70.5 L173 70.8 L174 70.5 L175 70.8 L176 70.4 L177 70.8 L178 70.7 L179 71.1 L180 71.5 L181 72.2 L182 72.4 L183 72.8 L184 72.9 L185 72.8 L186 73.1 L187 72.7 L188 72.4 L189 72.8 L190 72.7 L191 72.5 L192 72.9 L193 73.0 L194 72.6 L195 72.7 L196 72.6 L197 72.3 L198 72.1 L199 72.2 L200 72.4 L201 72.4 L202 72.5 L203 72.3 L204 72.1 L205 68.8 L206 65.6 L207 62.5 L208 60.0 L209 59.7 L210 62.2 L211 66.1 L212 70.0 L213 74.6 L214 75.3 L215 75.2 L216 74.9 L217 74.3 L218 74.4 L219 74.6 L220 74.3 L221 74.1 L222 73.7 L223 73.4 L224 73.5 L225 73.5 L226 73.2 L227 73.4 L228 73.6 L229 73.3 L230 73.5 L231 73.7 L232 74.0 L233 74.3 L234 74.7 L235 74.5 L236 74.8 L237 74.6 L238 74.7 L239 75.1 L240 75.2 L241 75.2 L242 75.2 L243 75.5 L244 75.1 L245 75.3 L246 75.5 L247 75.6 L248 75.5 L249 75.5 L250 75.5 L251 75.2 L252 74.9 L253 75.1 L254 75.0 L255 75.2 L256 75.4 L257 75.3 L258 75.7 L259 75.6 L260 75.8 L261 75.9 L262 75.8 L263 75.7 L264 76.1 L265 76.3 L266 76.4 L267 76.7 L268 76.8 L269 76.7 L270 76.4 L271 75.9 L272 75.8 L273 75.7 L274 76.1 L275 76.5 L276 76.4 L277 76.2 L278 76.4 L279 76.2 L280 76.1 L281 76.1 L282 76.0 L283 76.1 L284 76.6 L285 77.0 L286 76.7 L287 73.6 L288 70.0 L289 66.5 L290 66.6 L291 70.3 L292 74.5 L293 78.0 L294 77.0 L295 76.5 L296 75.8 L297 74.5 L298 72.8 L299 71.4 L300 70.6 L301 71.7 L302 72.9 L303 75.2 L304 76.0 L305 76.0 L306 75.8 L307 75.8 L308 75.3 L309 75.5 L310 74.9 L311 74.6 L312 70.9 L313 67.7 L314 67.3 L315 70.4 L316 73.3 L317 72.9 L318 73.0 L319 72.4 L320 73.8 L321 74.9 L322 75.8 L323 77.0 L324 76.7 L325 76.1 L326 76.0 L327 75.6 L328 75.0 L329 74.9 L330 75.2 L331 75.4 L332 75.6 L333 75.3 L334 75.1 L335 75.5 L336 75.3 L337 75.3 L338 75.4 L339 75.6 L340 75.9 L341 75.9 L342 75.6 L343 75.0 L344 75.1 L345 74.5 L346 74.1 L347 73.9 L348 74.0 L349 74.6 L350 75.1 L351 74.9 L352 75.5 L353 74.9 L354 74.8 L355 75.0 L356 74.9 L357 74.6 L358 74.0 L359 74.0 L360 73.5 L361 73.2 L362 73.3 L363 72.6 L364 72.1 L365 71.6 L366 71.9 L367 72.1 L368 72.6 L369 73.1 L370 73.0 L371 72.9 L372 72.7 L373 72.7 L374 72.3 L375 72.2 L376 71.8 L377 71.7 L378 71.4 L379 71.0 L380 71.0 L381 71.1 L382 71.3 L383 72.1 L384 72.1 L385 72.6 L386 72.4 L387 72.5 L388 72.7 L389 73.1 L390 73.0 L391 73.1 L392 73.3 L393 73.8 L394 73.7 L395 74.2 L396 74.2 L397 74.1 L398 73.8 L399 74.2 L400 74.3 L401 74.1 L402 74.3 L403 74.0 L404 74.1 L405 74.4 L406 74.0 L407 73.9 L408 74.2 L409 74.1 L410 73.7 L411 73.3 L412 73.0 L413 73.4 L414 72.9 L415 73.1 L416 72.9 L417 73.2 L418 73.1 L419 73.2 L420 73.4 L421 73.5 L422 73.4 L423 73.1 L424 73.1 L425 73.0 L426 73.2 L427 73.2 L428 73.1 L429 73.3 L430 73.7 L431 73.3 L432 73.6 L433 73.7 L434 73.4 L435 73.8 L436 73.9 L437 73.8 L438 73.3 L439 73.1 L440 72.7 L441 72.7 L442 72.7 L443 72.4 L444 72.2 L445 71.5 L446 71.3 L447 71.1 L448 71.9 L449 71.9 L450 72.2 L451 72.7 L452 73.6 L453 73.5 L454 73.7 L455 73.6 L456 73.5 L457 73.5 L458 74.0 L459 74.0 L460 73.5 L461 73.6 L462 73.5 L463 73.7 L464 74.1 L465 73.8 L466 74.0 L467 73.5 L468 73.0 L469 73.3 L470 73.1 L471 72.5 L472 72.4 L473 71.9 L474 71.8 L475 71.5 L476 71.8 L477 71.8 L478 72.0 L479 72.5 L480 72.9 L481 73.3 L482 73.4 L483 73.0 L484 72.9 L485 72.8 L486 73.2 L487 73.2 L488 72.9 L489 73.4 L490 73.4 L491 73.5 L492 73.3 L493 73.5 L494 73.2 L495 73.0 L496 73.2 L497 73.3 L498 73.4 L499 73.5 L500 73.6 L501 73.9 L502 73.6 L503 73.6 L504 73.7 L505 73.6 L506 73.8 L507 73.6 L508 73.6 L509 73.6 L510 73.5 L511 73.4 L512 73.7 L513 73.8 L514 73.9 L515 73.8 L516 73.5 L517 73.6 L518 73.3 L519 73.5 L520 73.5 L521 73.4 L522 73.8 L523 73.8 L524 73.6 L525 73.4 L526 73.5 L527 73.2 L528 73.0 L529 73.5 L530 73.3 L531 73.2 L532 73.5 L533 73.3 L534 73.4 L535 72.9 L536 72.9 L537 73.4 L538 73.2 L539 73.0 L540 73.3 L541 73.5 L542 73.3 L543 73.6 L544 73.2 L545 73.0 L546 72.9 L547 73.3 L548 73.7 L549 73.8 L550 73.8 L551 73.6 L552 73.4 L553 73.7 L554 73.5 L555 73.7 L556 73.7 L557 74.0 L558 73.7 L559 74.1 L560 73.9 L561 73.6 L562 73.7 L563 73.8 L564 73.9 L565 73.7 L566 73.5 L567 73.9 L568 73.7 L569 73.6 L570 74.1 L571 74.0 L572 73.9 L573 73.9 L574 73.9 L575 73.8 L576 74.1 L577 74.0 L578 74.1 L579 74.3 L580 74.3 L581 74.2 L582 74.0 L583 74.2 L584 73.8 L585 73.7 L586 73.8 L587 73.9 L588 74.0 L589 73.7 L590 73.4 L591 73.6 L592 73.6 L593 73.4 L594 73.7 L595 74.0 L596 73.7 L597 73.5 L598 73.8 L599 73.7 L600 73.5 L601 73.4 L602 73.4 L603 73.9 L604 73.5 L605 73.6 L606 74.0 L607 73.9 L608 74.2 L609 73.9 L610 73.5 L611 73.9 L612 73.7 L613 73.6 L614 73.3 L615 73.7 L616 73.5 L617 73.6 L618 73.6 L619 73.5 L620 73.9 L621 73.4 L622 73.6 L623 73.4 L624 73.8 L625 73.9 L626 73.6 L627 73.5 L628 73.3 L629 73.1 L630 73.0 L631 73.0 L632 73.1 L633 73.6 L634 73.8 L635 73.5 L636 73.6 L637 73.3 L638 73.1 L639 73.1 L640 73.4 L641 73.3 L642 73.7 L643 73.8 L644 73.9 L645 73.6 L646 73.3 L647 73.3 L648 73.5 L649 73.5 L650 73.3 L651 73.6 L652 73.6 L653 73.7 L654 74.0 L655 74.1 L656 73.8 L657 73.7 L658 73.8 L659 74.2 L660 74.0 L661 73.8 L662 73.6 L663 73.9 L664 74.3 L665 74.3 L666 74.0 L667 74.1 L668 74.4 L669 74.3 L670 74.1 L671 73.8 L672 73.8 L673 73.7 L674 73.8 L675 73.7 L676 73.6 L677 73.7 L678 73.6 L679 73.9 L680 74.1 L681 74.0 L682 73.7 L683 73.5 L684 73.8 L685 73.8 L686 73.5 L687 74.0 L688 73.8 L689 73.6 L690 73.9 L691 73.8 L692 74.2 L693 74.2 L694 74.0 L695 73.8 L696 74.1 L697 74.3 L698 73.8 L699 73.7 L700 74.2 L701 73.8 L702 74.0 L703 73.5 L704 73.6 L705 73.7 L706 73.8 L707 73.9 L708 74.2 L709 73.9 L710 73.7 L711 73.9 L712 74.2 L713 73.7 L714 73.7 L715 73.6 L716 73.9 L717 73.6 L718 73.5 L719 73.6 L720 73.3 L721 73.2 L722 73.1 L723 73.6 L724 73.4 L725 73.8 L726 73.5 L727 73.8 L728 73.9 L729 73.9 L730 73.6 L731 73.9 L732 73.8 L733 73.8 L734 73.9 L735 73.5 L736 73.6 L737 73.3 L738 73.5 L739 73.8 L740 73.8 L741 73.8 L742 74.0 L743 73.4 L744 73.2 L745 73.2 L746 73.8 L747 73.6 L748 73.6 L749 73.5 L750 73.8 L751 73.6 L752 73.7 L753 74.1 L754 74.0 L755 74.1 L756 73.7 L757 74.0 L758 73.9 L759 73.7 L760 73.8 L761 73.9 L762 73.6 L763 73.6 L764 73.4 L765 73.9 L766 73.6 L767 73.7 L768 73.6 L769 73.7 L770 74.0 L771 73.6 L772 73.9 L773 73.7 L774 74.0 L775 73.9 L776 74.0 L777 73.5 L778 73.4 L779 73.4 L780 73.4 L781 73.2 L782 73.8 L783 73.7 L784 73.9 L785 73.7 L786 73.9 L787 74.1 L788 74.2 L789 74.0 L790 74.1 L791 73.9 L792 73.6 L793 73.7 L794 73.5 L795 73.4 L796 73.7 L797 73.3 L798 73.5 L799 73.6 L800 73.6 L801 73.2 L802 73.2 L803 72.9 L804 73.1 L805 71.9 L806 68.9 L807 66.1 L808 63.3 L809 61.1 L810 59.0 L811 59.3 L812 61.3 L813 64.4 L814 67.2 L815 71.1 L816 74.9 L817 76.8 L818 76.8 L819 77.0 L820 76.8 L821 76.4 L822 74.9 L823 71.7 L824 68.9 L825 69.0 L826 71.6 L827 75.0 L828 76.8 L829 77.1 L830 76.9 L831 77.0 L832 77.0 L833 76.8 L834 76.5 L835 76.6 L836 76.9 L837 77.1 L838 77.1 L839 77.3 L840 77.3 L841 76.8 L842 76.7 L843 77.0 L844 76.7 L845 76.4 L846 76.1 L847 75.3 L848 75.1 L849 74.4 L850 74.0 L851 73.8 L852 74.1 L853 75.3 L854 75.7 L855 76.4 L856 77.3 L857 76.9 L858 76.8 L859 77.3 L860 76.9 L861 76.9 L862 76.9 L863 77.0 L864 77.0 L865 76.7 L866 76.9 L867 76.6 L868 77.0 L869 76.7 L870 77.1 L871 76.9 L872 76.4 L873 75.9 L874 75.8 L875 75.6 L876 75.5 L877 76.1 L878 76.7 L879 77.4 L880 78.0 L881 79.0 L882 80.0 L883 79.9 L884 79.6 L885 78.8 L886 73.6 L887 69.7 L888 69.8 L889 73.0 L890 77.0 L891 76.8 L892 77.0 L893 77.0 L894 76.7 L895 76.6 L896 76.7 L897 77.1 L898 77.5 L899 77.0 L900 77.2 L901 77.0 L902 76.9 L903 77.0 L904 77.0 L905 76.7 L906 76.4 L907 76.0 L908 76.1 L909 76.0 L910 76.0 L911 76.1 L912 76.6 L913 76.4 L914 76.8 L915 76.7 L916 77.0 L917 76.7 L918 76.5 L919 77.1 L920 76.8 L921 77.0 L922 76.8 L923 76.9 L924 76.8 L925 76.8 L926 76.7 L927 76.6 L928 76.1 L929 75.5 L930 75.2 L931 74.8 L932 74.2 L933 73.6 L934 73.2 L935 73.9 L936 74.3 L937 74.5 L938 75.4 L939 75.6 L940 75.8 L941 76.4 L942 77.2 L943 76.8 L944 76.6 L945 76.4 L946 76.4 L947 76.7 L948 76.9 L949 76.7 L950 76.4 L951 76.4 L952 75.9 L953 75.7 L954 75.5 L955 74.9 L956 74.1 L957 73.7 L958 72.9 L959 72.3 L960 72.2 L961 73.4 L962 73.9 L963 75.3 L964 76.2 L965 76.1 L966 76.1 L967 76.3 L968 76.2 L969 76.4 L970 76.1 L971 76.2 L972 76.7 L973 77.0 L974 76.8 L975 76.6 L976 76.7 L977 76.3 L978 76.3 L979 75.7 L980 75.2 L981 75.2 L982 75.2 L983 75.2 L984 74.9 L985 74.7 L986 74.7 L987 75.2 L988 75.5 L989 75.7 L990 75.8 L991 75.5 L992 76.0 L993 75.8 L994 76.2 L995 76.1 L996 76.2 L997 76.6 L998 76.5 L999 76.8 L1000 76.8 L1001 76.5 L1002 76.2 L1003 76.0 L1004 75.5 L1005 75.0 L1006 74.4 L1007 74.2 L1008 74.1 L1009 73.9 L1010 74.1 L1011 74.0 L1012 74.3 L1013 74.1 L1014 75.0 L1015 75.5 L1016 75.7 L1017 76.4 L1018 76.6 L1019 76.7 L1020 76.7 L1021 76.9 L1022 77.2 L1023 77.0 L1024 77.2 L1025 76.9 L1026 76.1 L1027 75.9 L1028 75.4 L1029 75.4 L1030 75.1 L1031 75.2 L1032 74.9 L1033 75.2 L1034 75.5 L1035 75.8 L1036 75.8 L1037 76.1 L1038 75.8 L1039 76.1 L1040 75.9 L1041 76.0 L1042 75.8 L1043 75.6 L1044 75.7 L1045 75.7 L1046 76.1 L1047 76.3 L1048 76.2 L1049 76.3 L1050 76.3 L1051 76.3 L1052 75.8 L1053 75.8 L1054 75.7 L1055 75.8 L1056 76.2 L1057 76.2 L1058 75.9 L1059 75.6 L1060 75.9 L1061 76.3 L1062 76.2 L1063 76.0 L1064 75.6 L1065 75.0 L1066 74.1 L1067 74.7 L1068 75.6 L1069 76.3 L1070 77.0 L1071 77.8 L1072 78.5 L1073 79.5 L1074 78.8 L1075 78.2 L1076 78.0 L1077 77.0 L1078 76.4 L1079 76.2 L1080 76.6 L1081 76.9 L1082 76.4 L1083 76.8 L1084 77.0 L1085 77.5 L1086 77.5 L1087 77.0 L1088 77.0 L1089 73.4 L1090 71.1 L1091 68.9 L1092 69.0 L1093 70.7 L1094 73.6 L1095 76.8 L1096 76.8 L1097 76.3 L1098 76.3 L1099 76.5 L1100 76.5 L1101 73.9 L1102 71.6 L1103 69.9 L1104 70.9 L1105 72.5 L1106 74.7 L1107 76.4 L1108 76.3 L1109 76.3 L1110 76.5 L1111 76.7 L1112 76.2 L1113 76.0 L1114 76.0 L1115 76.0 L1116 76.3 L1117 76.0 L1118 75.8 L1119 75.2 L1120 74.8 L1121 74.5 L1122 74.7 L1123 75.2 L1124 76.2 L1125 77.5 L1126 78.0 L1127 79.3 L1128 79.2 L1129 79.1 L1130 79.7 L1131 79.0 L1132 77.8 L1133 74.9 L1134 72.1 L1135 70.8 L1136 72.3 L1137 74.5 L1138 76.7 L1139 76.3 L1140 76.2 L1141 76.1 L1142 76.1 L1143 75.3 L1144 74.8 L1145 74.9 L1146 74.2 L1147 74.8 L1148 75.5 L1149 75.9 L1150 76.6 L1151 76.7 L1152 77.6 L1153 78.0 L1154 77.8 L1155 78.0 L1156 78.3 L1157 78.6 L1158 79.1 L1159 79.0 L1160 78.4 L1161 78.1 L1162 75.7 L1163 72.4 L1164 69.7 L1165 70.1 L1166 72.3 L1167 75.1 L1168 77.4 L1169 77.4 L1170 77.1 L1171 76.5 L1172 75.9 L1173 75.7 L1174 75.4 L1175 75.7 L1176 75.4 L1177 75.7 L1178 76.0 L1179 76.4 L1180 76.3 L1181 76.1 L1182 76.1 L1183 75.6 L1184 75.5 L1185 75.7 L1186 75.3 L1187 75.2 L1188 75.1 L1189 75.0 L1190 75.4 L1191 75.8 L1192 76.1 L1193 76.3 L1194 76.2 L1195 75.9 L1196 76.2 L1197 76.4 L1198 76.2 L1199 76.0 L1200 76.0 L1201 75.7 L1202 75.0 L1203 74.4 L1204 74.8 L1205 75.4 L1206 76.1 L1207 76.0 L1208 76.2 L1209 77.0 L1210 76.6 L1211 76.8 L1212 76.7 L1213 76.7 L1214 76.7 L1215 76.6 L1216 76.3 L1217 76.2 L1218 75.9 L1219 75.4 L1220 75.7 L1221 75.5 L1222 75.3 L1223 74.8 L1224 74.3 L1225 74.3 L1226 73.9 L1227 74.0 L1228 74.0 L1229 74.3 L1230 74.7 L1231 75.3 L1232 75.7 L1233 76.6 L1234 76.3 L1235 75.5 L1236 74.8 L1237 75.0 L1238 75.6 L1239 76.5 L1240 76.7 L1241 76.4 L1242 76.7 L1243 76.4 L1244 76.4 L1245 76.2 L1246 76.3 L1247 76.0 L1248 75.7 L1249 75.7 L1250 75.2 L1251 74.5 L1252 74.3 L1253 73.9 L1254 73.4 L1255 73.3 L1256 73.3 L1257 73.7 L1258 73.5 L1259 74.4 L1260 74.7 L1261 75.4 L1262 76.0 L1263 76.8 L1264 76.4 L1265 76.3 L1266 76.5 L1267 76.3 L1268 76.5 L1269 76.9 L1270 76.8 L1271 76.6 L1272 76.4 L1273 76.0 L1274 75.9 L1275 75.5 L1276 75.1 L1277 75.1 L1278 74.6 L1279 74.1 L1280 73.8 L1281 73.1 L1282 72.6 L1283 73.8 L1284 74.4 L1285 75.5 L1286 76.1 L1287 76.3 L1288 76.5 L1289 76.6 L1290 76.5 L1291 76.3 L1292 76.5 L1293 76.6 L1294 76.4 L1295 76.9 L1296 76.8 L1297 76.5 L1298 76.1 L1299 75.6 L1300 75.9 L1301 75.6 L1302 75.6 L1303 75.5 L1304 74.9 L1305 74.7 L1306 74.7 L1307 74.4 L1308 74.1 L1309 73.4 L1310 73.8 L1311 73.9 L1312 74.7 L1313 74.9 L1314 75.2 L1315 75.4 L1316 75.5 L1317 75.6 L1318 75.5 L1319 75.3 L1320 75.6 L1321 76.0 L1322 75.8 L1323 75.9 L1324 75.8 L1325 75.7 L1326 75.9 L1327 75.4 L1328 74.9 L1329 75.1 L1330 74.6 L1331 74.6 L1332 74.6 L1333 74.0 L1334 73.9 L1335 74.6 L1336 74.9 L1337 75.3 L1338 75.8 L1339 76.6 L1340 76.7 L1341 76.2 L1342 76.0 L1343 75.8 L1344 76.0 L1345 75.4 L1346 75.4 L1347 75.4 L1348 74.6 L1349 74.0 L1350 73.4 L1351 72.9 L1352 72.8 L1353 72.9 L1354 73.2 L1355 73.8 L1356 74.0 L1357 74.7 L1358 75.6 L1359 76.8 L1360 76.0 L1361 75.2 L1362 74.5 L1363 73.7 L1364 74.1 L1365 74.7 L1366 75.1 L1367 76.0 L1368 76.5 L1369 76.7 L1370 76.6 L1371 76.6 L1372 76.3 L1373 76.3 L1374 76.2 L1375 76.4 L1376 76.0 L1377 75.9 L1378 76.2 L1379 75.9 L1380 76.2 L1381 76.3 L1382 76.3 L1383 76.1 L1384 76.3 L1385 76.5 L1386 75.9 L1387 76.3 L1388 76.2 L1389 76.4 L1390 76.5 L1391 76.6 L1392 76.1 L1393 76.1 L1394 76.1 L1395 76.0 L1396 76.1 L1397 75.8 L1398 76.2 L1399 75.9 L1400 76.0 L1401 76.0 L1402 75.6 L1403 75.9 L1404 75.6 L1405 75.6 L1406 75.7 L1407 75.9 L1408 76.1 L1409 76.1 L1410 75.6 L1411 75.4 L1412 75.2 L1413 75.1 L1414 74.9 L1415 74.4 L1416 73.6 L1417 75.6 L1418 75.8 L1419 76.3 L1420 76.3 L1421 76.1 L1422 75.8 L1423 76.2 L1424 75.8 L1425 75.7 L1426 76.1 L1427 76.5 L1428 76.4 L1429 76.4 L1430 75.9 L1431 75.9 L1432 75.7 L1433 76.3 L1434 76.1 L1435 76.2 L1436 76.0 L1437 76.6 L1438 77.1 L1439 77.3 L1440 77.6 L1441 77.9 L1442 78.3 L1443 78.7 L1444 79.1 L1445 78.9 L1446 78.9 L1447 78.9 L1448 79.6 L1449 79.4 L1450 80.0 L1451 80.0 L1452 79.2 L1453 78.7 L1454 78.6 L1455 78.6 L1456 78.8 L1457 78.6 L1458 78.8 L1459 78.9 L1460 79.0 L1461 78.9 L1462 79.2 L1463 79.0 L1464 79.3 L1465 79.1 L1466 78.6 L1467 78.5 L1468 77.9 L1469 77.4 L1470 74.8 L1471 72.2 L1472 70.8 L1473 70.4 L1474 72.2 L1475 73.8 L1476 75.9 L1477 75.8 L1478 76.1 L1479 76.1 L1480 75.7 L1481 75.8 L1482 76.1 L1483 76.2 L1484 76.0 L1485 75.8 L1486 76.3 L1487 76.1" fill="none" stroke="#ee920a" stroke-width="1"/>
<rect x="4" y="73" width="51.5" height="10.2" fill="#000"/>
<rect x="1486.2" y="72" width="42" height="11.2" fill="#000"/>
<rect x="68.6" y="59" width="1.4" height="24.2" fill="#fff"/>
<path d="M315.4 59.3V74M315.4 60L326.8 63.7 315.4 68" fill="none" stroke="#ffee00" stroke-width="1.5"/>
<path d="M1490 59.4V72M1496.3 59.4V72M1490 60L1480 63.6 1490 67.2M1496.3 60L1486.6 63.6 1496.3 67.2" fill="none" stroke="#ffee00" stroke-width="1.5"/>
<path d="M1521 71.4L1522.5 70 1524 71.4" fill="none" stroke="#ee920a" stroke-width="0.9"/>
</svg>
<div class="cf" style="left:5px;top:61.5px;color:#ff9900">277.00 p/s</div>
<div class="cf" style="left:72.3px;top:61.5px;color:#fff">12.319s</div>
<div class="cf" style="left:4.2px;top:74.2px;color:#fff">-0.000s</div>
<div class="cf" style="left:1487px;top:74.2px;color:#fff">286.20</div>
<div class="a" style="left:2px;top:93px;width:1129px;height:1px;background:#c3cedc;"></div>
<div class="a" style="left:2px;top:94px;width:1129px;height:16px;background:#cfddee;"></div>
<div class="a" style="left:2px;top:94px;width:1px;height:16px;background:#fff;"></div>
<div class="a" style="left:1130px;top:94px;width:1px;height:16px;background:#fff;"></div>
<div class="a" style="left:2px;top:110px;width:1129px;height:1px;background:#e8eef6;"></div>
<div class="t" style="left:11.5px;top:95.50px;letter-spacing:-0.067px;">Time:12.318554s</div>
<div class="t" style="left:110.9px;top:95.50px;letter-spacing:-0.130px;">Real time:Jan. 1, 07:14:12</div>
<div class="t" style="left:254.4px;top:95.50px;letter-spacing:0.109px;">Nodes:0</div>
<div class="t" style="left:310.1px;top:95.50px;letter-spacing:-0.274px;">Event:EFR Rx packet</div>
<svg class="a" style="left:1117px;top:97px" width="9" height="9" viewBox="0 0 9 9"><rect x="0.6" y="0.6" width="7.2" height="7.2" fill="#fff" stroke="#1c1c1c" stroke-width="1"/><rect x="0.1" y="0.1" width="8.2" height="1.3" fill="#1c1c1c"/></svg>
<div class="a" style="left:2px;top:115px;width:1129px;height:1px;background:#a8adb4;"></div>
<div class="a" style="left:2px;top:116px;width:1129px;height:18px;background:#f0f0f0;"></div>
<div class="a" style="left:2px;top:116px;width:1129px;height:1px;background:#fbfbfb;"></div>
<div class="a" style="left:1131px;top:115px;width:1px;height:19px;background:#a9b1bd;"></div>
<div class="a" style="left:1092px;top:117px;width:38px;height:16px;background:#cddcee;"></div>
<div class="a" style="left:4px;top:117px;width:8px;height:16px;background:#c5d5ea;"></div>
<div class="t" style="left:12.1px;top:118.60px;letter-spacing:0.009px;">Transactions</div>
<div class="t" style="left:92.9px;top:118.60px;letter-spacing:0.017px;">total:3,235 shown:3,168</div>
<svg class="a" style="left:1102.3px;top:122px" width="9.4" height="5.6" viewBox="0 0 9.4 5.6"><path d="M0.9 0.6H8.5L4.7 4.8Z" fill="#fff" stroke="#333" stroke-width="0.9"/></svg>
<svg class="a" style="left:1117px;top:119px" width="9" height="9" viewBox="0 0 9 9"><rect x="0.6" y="0.6" width="7.2" height="7.2" fill="#fff" stroke="#1c1c1c" stroke-width="1"/><rect x="0.1" y="0.1" width="8.2" height="0.9" fill="#1c1c1c"/><rect x="0.6" y="2.3" width="7.2" height="0.9" fill="#1c1c1c"/></svg>
<div class="a" style="left:2px;top:134px;width:1129px;height:558px;background:#ffffff;"></div>
<div class="a" style="left:2px;top:134px;width:1129px;height:1px;background:#828790;"></div>
<div class="a" style="left:2px;top:134px;width:1px;height:558px;background:#828790;"></div>
<div class="a" style="left:1131px;top:134px;width:1px;height:558px;background:#9aa3b0;"></div>
<div class="a" style="left:35.5px;top:135px;width:1px;height:22px;background:#e5e5e5;"></div>
<div class="a" style="left:157px;top:135px;width:1px;height:22px;background:#e5e5e5;"></div>
<div class="a" style="left:234.5px;top:135px;width:1px;height:22px;background:#e5e5e5;"></div>
<div class="a" style="left:511px;top:135px;width:1px;height:22px;background:#e5e5e5;"></div>
<div class="a" style="left:622px;top:135px;width:1px;height:22px;background:#e5e5e5;"></div>
<div class="a" style="left:732px;top:135px;width:1px;height:22px;background:#e5e5e5;"></div>
<div class="a" style="left:787.5px;top:135px;width:1px;height:22px;background:#e5e5e5;"></div>
<div class="a" style="left:842.5px;top:135px;width:1px;height:22px;background:#e5e5e5;"></div>
<div class="a" style="left:898px;top:135px;width:1px;height:22px;background:#e5e5e5;"></div>
<div class="a" style="left:1008px;top:135px;width:1px;height:22px;background:#e5e5e5;"></div>
<div class="t" style="left:41.0px;top:139.60px;letter-spacing:0.453px;">Time</div>
<div class="t" style="left:162.5px;top:139.60px;letter-spacing:0.433px;">Duration</div>
<div class="t" style="left:240.0px;top:139.60px;letter-spacing:0.133px;">Summary</div>
<div class="t" style="left:516.5px;top:139.60px;letter-spacing:-0.047px;">NWK Src</div>
<div class="t" style="left:627.5px;top:139.60px;letter-spacing:0.190px;">NWK Dest</div>
<div class="t" style="left:737.5px;top:139.60px;letter-spacing:-0.078px;">P#</div>
<div class="t" style="left:793.0px;top:139.60px;letter-spacing:1.716px;">M#</div>
<div class="t" style="left:848.0px;top:139.60px;letter-spacing:-0.678px;">E#</div>
<div class="t" style="left:903.5px;top:139.60px;letter-spacing:-0.014px;">Error Status</div>
<div class="t" style="left:1013.5px;top:139.60px;letter-spacing:0.154px;">Warning Status</div>
<div class="a" style="left:35.5px;top:157px;width:1px;height:517px;background:#f2f5fa;"></div>
<div class="a" style="left:157px;top:157px;width:1px;height:517px;background:#f2f5fa;"></div>
<div class="a" style="left:234.5px;top:157px;width:1px;height:517px;background:#f2f5fa;"></div>
<div class="a" style="left:511px;top:157px;width:1px;height:517px;background:#f2f5fa;"></div>
<div class="a" style="left:622px;top:157px;width:1px;height:517px;background:#f2f5fa;"></div>
<div class="a" style="left:732px;top:157px;width:1px;height:517px;background:#f2f5fa;"></div>
<div class="a" style="left:787.5px;top:157px;width:1px;height:517px;background:#f2f5fa;"></div>
<div class="a" style="left:842.5px;top:157px;width:1px;height:517px;background:#f2f5fa;"></div>
<div class="a" style="left:898px;top:157px;width:1px;height:517px;background:#f2f5fa;"></div>
<div class="a" style="left:1008px;top:157px;width:1px;height:517px;background:#f2f5fa;"></div>
<div class="a" style="left:19.5px;top:157px;width:1093.5px;height:19px;background:#ffcccc;"></div>
<div class="a" style="left:35.5px;top:157px;width:1px;height:19px;background:#fff5f5;"></div>
<div class="a" style="left:157px;top:157px;width:1px;height:19px;background:#fff5f5;"></div>
<div class="a" style="left:234.5px;top:157px;width:1px;height:19px;background:#fff5f5;"></div>
<div class="a" style="left:511px;top:157px;width:1px;height:19px;background:#fff5f5;"></div>
<div class="a" style="left:622px;top:157px;width:1px;height:19px;background:#fff5f5;"></div>
<div class="a" style="left:732px;top:157px;width:1px;height:19px;background:#fff5f5;"></div>
<div class="a" style="left:787.5px;top:157px;width:1px;height:19px;background:#fff5f5;"></div>
<div class="a" style="left:842.5px;top:157px;width:1px;height:19px;background:#fff5f5;"></div>
<div class="a" style="left:898px;top:157px;width:1px;height:19px;background:#fff5f5;"></div>
<div class="a" style="left:1008px;top:157px;width:1px;height:19px;background:#fff5f5;"></div>
<div class="t" style="left:41.2px;top:159.80px;letter-spacing:-0.222px;">10.517656</div>
<div class="t" style="left:162.7px;top:159.80px;letter-spacing:-0.195px;">0.001</div>
<div class="t" style="left:240.2px;top:159.80px;letter-spacing:-0.042px;">BLE Adv - Scan Request/Response</div>
<div class="t" style="left:516.7px;top:159.80px;letter-spacing:-0.010px;">50 4A D4 8D 5B ...</div>
<div class="t" style="left:627.1px;top:159.80px;letter-spacing:-0.478px;">90 FD 9F C8 EF FC</div>
<div class="t" style="left:737.7px;top:159.80px;">2</div>
<div class="a" style="left:19.5px;top:176px;width:1093.5px;height:20px;background:#ffcccc;"></div>
<div class="a" style="left:35.5px;top:176px;width:1px;height:20px;background:#fff5f5;"></div>
<div class="a" style="left:157px;top:176px;width:1px;height:20px;background:#fff5f5;"></div>
<div class="a" style="left:234.5px;top:176px;width:1px;height:20px;background:#fff5f5;"></div>
<div class="a" style="left:511px;top:176px;width:1px;height:20px;background:#fff5f5;"></div>
<div class="a" style="left:622px;top:176px;width:1px;height:20px;background:#fff5f5;"></div>
<div class="a" style="left:732px;top:176px;width:1px;height:20px;background:#fff5f5;"></div>
<div class="a" style="left:787.5px;top:176px;width:1px;height:20px;background:#fff5f5;"></div>
<div class="a" style="left:842.5px;top:176px;width:1px;height:20px;background:#fff5f5;"></div>
<div class="a" style="left:898px;top:176px;width:1px;height:20px;background:#fff5f5;"></div>
<div class="a" style="left:1008px;top:176px;width:1px;height:20px;background:#fff5f5;"></div>
<div class="t" style="left:41.2px;top:179.00px;letter-spacing:-0.222px;">10.691348</div>
<div class="t" style="left:162.7px;top:179.00px;letter-spacing:-0.195px;">0.004</div>
<div class="t" style="left:240.2px;top:179.00px;letter-spacing:-0.042px;">BLE Adv - Scan Request/Response</div>
<div class="t" style="left:516.7px;top:179.00px;letter-spacing:-0.028px;">72 B7 27 BF 46 A6</div>
<div class="t" style="left:627.1px;top:179.00px;letter-spacing:-0.090px;">4A EB 84 55 D6 ...</div>
<div class="t" style="left:737.7px;top:179.00px;">2</div>
<div class="a" style="left:19.5px;top:196px;width:1093.5px;height:19px;background:#ffcccc;"></div>
<div class="a" style="left:35.5px;top:196px;width:1px;height:19px;background:#fff5f5;"></div>
<div class="a" style="left:157px;top:196px;width:1px;height:19px;background:#fff5f5;"></div>
<div class="a" style="left:234.5px;top:196px;width:1px;height:19px;background:#fff5f5;"></div>
<div class="a" style="left:511px;top:196px;width:1px;height:19px;background:#fff5f5;"></div>
<div class="a" style="left:622px;top:196px;width:1px;height:19px;background:#fff5f5;"></div>
<div class="a" style="left:732px;top:196px;width:1px;height:19px;background:#fff5f5;"></div>
<div class="a" style="left:787.5px;top:196px;width:1px;height:19px;background:#fff5f5;"></div>
<div class="a" style="left:842.5px;top:196px;width:1px;height:19px;background:#fff5f5;"></div>
<div class="a" style="left:898px;top:196px;width:1px;height:19px;background:#fff5f5;"></div>
<div class="a" style="left:1008px;top:196px;width:1px;height:19px;background:#fff5f5;"></div>
<div class="t" style="left:41.2px;top:198.20px;letter-spacing:-0.222px;">10.718474</div>
<div class="t" style="left:162.7px;top:198.20px;letter-spacing:-0.195px;">0.001</div>
<div class="t" style="left:240.2px;top:198.20px;letter-spacing:-0.042px;">BLE Adv - Scan Request/Response</div>
<div class="t" style="left:516.7px;top:198.20px;letter-spacing:-0.042px;">55 25 59 DF 08 41</div>
<div class="t" style="left:627.1px;top:198.20px;letter-spacing:-0.478px;">90 FD 9F C8 EF FC</div>
<div class="t" style="left:737.7px;top:198.20px;">2</div>
<div class="a" style="left:19.5px;top:215px;width:1093.5px;height:19px;background:#ffcccc;"></div>
<div class="a" style="left:35.5px;top:215px;width:1px;height:19px;background:#fff5f5;"></div>
<div class="a" style="left:157px;top:215px;width:1px;height:19px;background:#fff5f5;"></div>
<div class="a" style="left:234.5px;top:215px;width:1px;height:19px;background:#fff5f5;"></div>
<div class="a" style="left:511px;top:215px;width:1px;height:19px;background:#fff5f5;"></div>
<div class="a" style="left:622px;top:215px;width:1px;height:19px;background:#fff5f5;"></div>
<div class="a" style="left:732px;top:215px;width:1px;height:19px;background:#fff5f5;"></div>
<div class="a" style="left:787.5px;top:215px;width:1px;height:19px;background:#fff5f5;"></div>
<div class="a" style="left:842.5px;top:215px;width:1px;height:19px;background:#fff5f5;"></div>
<div class="a" style="left:898px;top:215px;width:1px;height:19px;background:#fff5f5;"></div>
<div class="a" style="left:1008px;top:215px;width:1px;height:19px;background:#fff5f5;"></div>
<div class="t" style="left:41.2px;top:217.40px;letter-spacing:-0.222px;">10.719678</div>
<div class="t" style="left:162.7px;top:217.40px;letter-spacing:-0.195px;">0.001</div>
<div class="t" style="left:240.2px;top:217.40px;letter-spacing:-0.042px;">BLE Adv - Scan Request/Response</div>
<div class="t" style="left:516.7px;top:217.40px;letter-spacing:-0.000px;">55 82 70 8A 0D F1</div>
<div class="t" style="left:627.1px;top:217.40px;letter-spacing:-0.478px;">90 FD 9F C8 EF FC</div>
<div class="t" style="left:737.7px;top:217.40px;">2</div>
<div class="a" style="left:19.5px;top:234px;width:1093.5px;height:19px;background:#ffcccc;"></div>
<div class="a" style="left:35.5px;top:234px;width:1px;height:19px;background:#fff5f5;"></div>
<div class="a" style="left:157px;top:234px;width:1px;height:19px;background:#fff5f5;"></div>
<div class="a" style="left:234.5px;top:234px;width:1px;height:19px;background:#fff5f5;"></div>
<div class="a" style="left:511px;top:234px;width:1px;height:19px;background:#fff5f5;"></div>
<div class="a" style="left:622px;top:234px;width:1px;height:19px;background:#fff5f5;"></div>
<div class="a" style="left:732px;top:234px;width:1px;height:19px;background:#fff5f5;"></div>
<div class="a" style="left:787.5px;top:234px;width:1px;height:19px;background:#fff5f5;"></div>
<div class="a" style="left:842.5px;top:234px;width:1px;height:19px;background:#fff5f5;"></div>
<div class="a" style="left:898px;top:234px;width:1px;height:19px;background:#fff5f5;"></div>
<div class="a" style="left:1008px;top:234px;width:1px;height:19px;background:#fff5f5;"></div>
<div class="t" style="left:41.2px;top:236.60px;letter-spacing:-0.222px;">10.919258</div>
<div class="t" style="left:162.7px;top:236.60px;letter-spacing:-0.195px;">0.001</div>
<div class="t" style="left:240.2px;top:236.60px;letter-spacing:-0.042px;">BLE Adv - Scan Request/Response</div>
<div class="t" style="left:516.7px;top:236.60px;letter-spacing:-0.068px;">7F A7 32 2E 14 92</div>
<div class="t" style="left:627.1px;top:236.60px;letter-spacing:-0.478px;">90 FD 9F C8 EF FC</div>
<div class="t" style="left:737.7px;top:236.60px;">2</div>
<div class="a" style="left:19.5px;top:253px;width:1093.5px;height:19px;background:#ffcccc;"></div>
<div class="a" style="left:35.5px;top:253px;width:1px;height:19px;background:#fff5f5;"></div>
<div class="a" style="left:157px;top:253px;width:1px;height:19px;background:#fff5f5;"></div>
<div class="a" style="left:234.5px;top:253px;width:1px;height:19px;background:#fff5f5;"></div>
<div class="a" style="left:511px;top:253px;width:1px;height:19px;background:#fff5f5;"></div>
<div class="a" style="left:622px;top:253px;width:1px;height:19px;background:#fff5f5;"></div>
<div class="a" style="left:732px;top:253px;width:1px;height:19px;background:#fff5f5;"></div>
<div class="a" style="left:787.5px;top:253px;width:1px;height:19px;background:#fff5f5;"></div>
<div class="a" style="left:842.5px;top:253px;width:1px;height:19px;background:#fff5f5;"></div>
<div class="a" style="left:898px;top:253px;width:1px;height:19px;background:#fff5f5;"></div>
<div class="a" style="left:1008px;top:253px;width:1px;height:19px;background:#fff5f5;"></div>
<div class="t" style="left:41.2px;top:255.80px;letter-spacing:-0.222px;">10.928807</div>
<div class="t" style="left:162.7px;top:255.80px;letter-spacing:-0.195px;">0.001</div>
<div class="t" style="left:240.2px;top:255.80px;letter-spacing:-0.106px;">BLE LL - Adv Scan Request</div>
<div class="t" style="left:516.7px;top:255.80px;letter-spacing:-0.028px;">72 B7 27 BF 46 A6</div>
<div class="t" style="left:627.1px;top:255.80px;letter-spacing:0.135px;">44 F8 A7 7A 10 D0</div>
<div class="t" style="left:737.7px;top:255.80px;">1</div>
<div class="t" style="left:903.7px;top:255.80px;letter-spacing:0.149px;">Missing packets</div>
<div class="a" style="left:19.5px;top:272px;width:1093.5px;height:20px;background:#ffcccc;"></div>
<div class="a" style="left:35.5px;top:272px;width:1px;height:20px;background:#fff5f5;"></div>
<div class="a" style="left:157px;top:272px;width:1px;height:20px;background:#fff5f5;"></div>
<div class="a" style="left:234.5px;top:272px;width:1px;height:20px;background:#fff5f5;"></div>
<div class="a" style="left:511px;top:272px;width:1px;height:20px;background:#fff5f5;"></div>
<div class="a" style="left:622px;top:272px;width:1px;height:20px;background:#fff5f5;"></div>
<div class="a" style="left:732px;top:272px;width:1px;height:20px;background:#fff5f5;"></div>
<div class="a" style="left:787.5px;top:272px;width:1px;height:20px;background:#fff5f5;"></div>
<div class="a" style="left:842.5px;top:272px;width:1px;height:20px;background:#fff5f5;"></div>
<div class="a" style="left:898px;top:272px;width:1px;height:20px;background:#fff5f5;"></div>
<div class="a" style="left:1008px;top:272px;width:1px;height:20px;background:#fff5f5;"></div>
<div class="t" style="left:41.2px;top:275.00px;letter-spacing:-0.114px;">11.004350</div>
<div class="t" style="left:162.7px;top:275.00px;letter-spacing:-0.195px;">0.001</div>
<div class="t" style="left:240.2px;top:275.00px;letter-spacing:-0.042px;">BLE Adv - Scan Request/Response</div>
<div class="t" style="left:516.7px;top:275.00px;letter-spacing:-0.000px;">55 82 70 8A 0D F1</div>
<div class="t" style="left:627.1px;top:275.00px;letter-spacing:0.037px;">4B 76 31 93 70 78</div>
<div class="t" style="left:737.7px;top:275.00px;">2</div>
<div class="a" style="left:19.5px;top:292px;width:1093.5px;height:19px;background:#ffcccc;"></div>
<div class="a" style="left:35.5px;top:292px;width:1px;height:19px;background:#fff5f5;"></div>
<div class="a" style="left:157px;top:292px;width:1px;height:19px;background:#fff5f5;"></div>
<div class="a" style="left:234.5px;top:292px;width:1px;height:19px;background:#fff5f5;"></div>
<div class="a" style="left:511px;top:292px;width:1px;height:19px;background:#fff5f5;"></div>
<div class="a" style="left:622px;top:292px;width:1px;height:19px;background:#fff5f5;"></div>
<div class="a" style="left:732px;top:292px;width:1px;height:19px;background:#fff5f5;"></div>
<div class="a" style="left:787.5px;top:292px;width:1px;height:19px;background:#fff5f5;"></div>
<div class="a" style="left:842.5px;top:292px;width:1px;height:19px;background:#fff5f5;"></div>
<div class="a" style="left:898px;top:292px;width:1px;height:19px;background:#fff5f5;"></div>
<div class="a" style="left:1008px;top:292px;width:1px;height:19px;background:#fff5f5;"></div>
<div class="t" style="left:41.2px;top:294.20px;letter-spacing:-0.114px;">11.007952</div>
<div class="t" style="left:162.7px;top:294.20px;letter-spacing:-0.195px;">0.001</div>
<div class="t" style="left:240.2px;top:294.20px;letter-spacing:-0.106px;">BLE LL - Adv Scan Request</div>
<div class="t" style="left:516.7px;top:294.20px;letter-spacing:-0.028px;">72 B7 27 BF 46 A6</div>
<div class="t" style="left:627.1px;top:294.20px;letter-spacing:0.037px;">4B 76 31 93 70 78</div>
<div class="t" style="left:737.7px;top:294.20px;">1</div>
<div class="t" style="left:903.7px;top:294.20px;letter-spacing:0.149px;">Missing packets</div>
<div class="a" style="left:19.5px;top:311px;width:1093.5px;height:19px;background:#ffcccc;"></div>
<div class="a" style="left:35.5px;top:311px;width:1px;height:19px;background:#fff5f5;"></div>
<div class="a" style="left:157px;top:311px;width:1px;height:19px;background:#fff5f5;"></div>
<div class="a" style="left:234.5px;top:311px;width:1px;height:19px;background:#fff5f5;"></div>
<div class="a" style="left:511px;top:311px;width:1px;height:19px;background:#fff5f5;"></div>
<div class="a" style="left:622px;top:311px;width:1px;height:19px;background:#fff5f5;"></div>
<div class="a" style="left:732px;top:311px;width:1px;height:19px;background:#fff5f5;"></div>
<div class="a" style="left:787.5px;top:311px;width:1px;height:19px;background:#fff5f5;"></div>
<div class="a" style="left:842.5px;top:311px;width:1px;height:19px;background:#fff5f5;"></div>
<div class="a" style="left:898px;top:311px;width:1px;height:19px;background:#fff5f5;"></div>
<div class="a" style="left:1008px;top:311px;width:1px;height:19px;background:#fff5f5;"></div>
<div class="t" style="left:41.2px;top:313.40px;letter-spacing:-0.114px;">11.327283</div>
<div class="t" style="left:162.7px;top:313.40px;letter-spacing:-0.195px;">0.001</div>
<div class="t" style="left:240.2px;top:313.40px;letter-spacing:-0.106px;">BLE LL - Adv Scan Request</div>
<div class="t" style="left:516.7px;top:313.40px;letter-spacing:-0.000px;">55 82 70 8A 0D F1</div>
<div class="t" style="left:627.1px;top:313.40px;letter-spacing:-0.225px;">18 B4 30 DE 0E F6</div>
<div class="t" style="left:737.7px;top:313.40px;">1</div>
<div class="t" style="left:903.7px;top:313.40px;letter-spacing:0.149px;">Missing packets</div>
<div class="a" style="left:19.5px;top:330px;width:1093.5px;height:19px;background:#ffcccc;"></div>
<div class="a" style="left:35.5px;top:330px;width:1px;height:19px;background:#fff5f5;"></div>
<div class="a" style="left:157px;top:330px;width:1px;height:19px;background:#fff5f5;"></div>
<div class="a" style="left:234.5px;top:330px;width:1px;height:19px;background:#fff5f5;"></div>
<div class="a" style="left:511px;top:330px;width:1px;height:19px;background:#fff5f5;"></div>
<div class="a" style="left:622px;top:330px;width:1px;height:19px;background:#fff5f5;"></div>
<div class="a" style="left:732px;top:330px;width:1px;height:19px;background:#fff5f5;"></div>
<div class="a" style="left:787.5px;top:330px;width:1px;height:19px;background:#fff5f5;"></div>
<div class="a" style="left:842.5px;top:330px;width:1px;height:19px;background:#fff5f5;"></div>
<div class="a" style="left:898px;top:330px;width:1px;height:19px;background:#fff5f5;"></div>
<div class="a" style="left:1008px;top:330px;width:1px;height:19px;background:#fff5f5;"></div>
<div class="t" style="left:41.2px;top:332.60px;letter-spacing:-0.114px;">11.516854</div>
<div class="t" style="left:162.7px;top:332.60px;letter-spacing:-0.195px;">0.001</div>
<div class="t" style="left:240.2px;top:332.60px;letter-spacing:-0.106px;">BLE LL - Adv Scan Request</div>
<div class="t" style="left:516.7px;top:332.60px;letter-spacing:-0.068px;">7F A7 32 2E 14 92</div>
<div class="t" style="left:627.1px;top:332.60px;letter-spacing:0.104px;">67 A7 A7 29 51 3F</div>
<div class="t" style="left:737.7px;top:332.60px;">1</div>
<div class="t" style="left:903.7px;top:332.60px;letter-spacing:0.149px;">Missing packets</div>
<div class="a" style="left:19.5px;top:349px;width:1093.5px;height:19px;background:#ffcccc;"></div>
<div class="a" style="left:35.5px;top:349px;width:1px;height:19px;background:#fff5f5;"></div>
<div class="a" style="left:157px;top:349px;width:1px;height:19px;background:#fff5f5;"></div>
<div class="a" style="left:234.5px;top:349px;width:1px;height:19px;background:#fff5f5;"></div>
<div class="a" style="left:511px;top:349px;width:1px;height:19px;background:#fff5f5;"></div>
<div class="a" style="left:622px;top:349px;width:1px;height:19px;background:#fff5f5;"></div>
<div class="a" style="left:732px;top:349px;width:1px;height:19px;background:#fff5f5;"></div>
<div class="a" style="left:787.5px;top:349px;width:1px;height:19px;background:#fff5f5;"></div>
<div class="a" style="left:842.5px;top:349px;width:1px;height:19px;background:#fff5f5;"></div>
<div class="a" style="left:898px;top:349px;width:1px;height:19px;background:#fff5f5;"></div>
<div class="a" style="left:1008px;top:349px;width:1px;height:19px;background:#fff5f5;"></div>
<div class="t" style="left:41.2px;top:351.80px;letter-spacing:-0.114px;">11.518517</div>
<div class="t" style="left:162.7px;top:351.80px;letter-spacing:-0.195px;">0.001</div>
<div class="t" style="left:240.2px;top:351.80px;letter-spacing:-0.042px;">BLE Adv - Scan Request/Response</div>
<div class="t" style="left:516.7px;top:351.80px;letter-spacing:-0.068px;">7F A7 32 2E 14 92</div>
<div class="t" style="left:627.1px;top:351.80px;letter-spacing:-0.478px;">90 FD 9F C8 EF FC</div>
<div class="t" style="left:737.7px;top:351.80px;">2</div>
<div class="a" style="left:19.5px;top:368px;width:1093.5px;height:20px;background:#ffcccc;"></div>
<div class="a" style="left:35.5px;top:368px;width:1px;height:20px;background:#fff5f5;"></div>
<div class="a" style="left:157px;top:368px;width:1px;height:20px;background:#fff5f5;"></div>
<div class="a" style="left:234.5px;top:368px;width:1px;height:20px;background:#fff5f5;"></div>
<div class="a" style="left:511px;top:368px;width:1px;height:20px;background:#fff5f5;"></div>
<div class="a" style="left:622px;top:368px;width:1px;height:20px;background:#fff5f5;"></div>
<div class="a" style="left:732px;top:368px;width:1px;height:20px;background:#fff5f5;"></div>
<div class="a" style="left:787.5px;top:368px;width:1px;height:20px;background:#fff5f5;"></div>
<div class="a" style="left:842.5px;top:368px;width:1px;height:20px;background:#fff5f5;"></div>
<div class="a" style="left:898px;top:368px;width:1px;height:20px;background:#fff5f5;"></div>
<div class="a" style="left:1008px;top:368px;width:1px;height:20px;background:#fff5f5;"></div>
<div class="t" style="left:41.2px;top:371.00px;letter-spacing:-0.114px;">11.533994</div>
<div class="t" style="left:162.7px;top:371.00px;letter-spacing:-0.195px;">0.001</div>
<div class="t" style="left:240.2px;top:371.00px;letter-spacing:-0.042px;">BLE Adv - Scan Request/Response</div>
<div class="t" style="left:516.7px;top:371.00px;letter-spacing:-0.068px;">7F A7 32 2E 14 92</div>
<div class="t" style="left:627.1px;top:371.00px;letter-spacing:0.136px;">75 D2 69 28 6D 6A</div>
<div class="t" style="left:737.7px;top:371.00px;">2</div>
<div class="a" style="left:19.5px;top:388px;width:1093.5px;height:19px;background:#ffcccc;"></div>
<div class="a" style="left:35.5px;top:388px;width:1px;height:19px;background:#fff5f5;"></div>
<div class="a" style="left:157px;top:388px;width:1px;height:19px;background:#fff5f5;"></div>
<div class="a" style="left:234.5px;top:388px;width:1px;height:19px;background:#fff5f5;"></div>
<div class="a" style="left:511px;top:388px;width:1px;height:19px;background:#fff5f5;"></div>
<div class="a" style="left:622px;top:388px;width:1px;height:19px;background:#fff5f5;"></div>
<div class="a" style="left:732px;top:388px;width:1px;height:19px;background:#fff5f5;"></div>
<div class="a" style="left:787.5px;top:388px;width:1px;height:19px;background:#fff5f5;"></div>
<div class="a" style="left:842.5px;top:388px;width:1px;height:19px;background:#fff5f5;"></div>
<div class="a" style="left:898px;top:388px;width:1px;height:19px;background:#fff5f5;"></div>
<div class="a" style="left:1008px;top:388px;width:1px;height:19px;background:#fff5f5;"></div>
<div class="t" style="left:41.2px;top:390.20px;letter-spacing:-0.114px;">11.603593</div>
<div class="t" style="left:162.7px;top:390.20px;letter-spacing:-0.195px;">0.001</div>
<div class="t" style="left:240.2px;top:390.20px;letter-spacing:-0.042px;">BLE Adv - Scan Request/Response</div>
<div class="t" style="left:516.7px;top:390.20px;letter-spacing:-0.000px;">55 82 70 8A 0D F1</div>
<div class="t" style="left:627.1px;top:390.20px;letter-spacing:-0.240px;">90 FD 9F C8 F0 19</div>
<div class="t" style="left:737.7px;top:390.20px;">2</div>
<div class="a" style="left:19.5px;top:407px;width:1093.5px;height:19px;background:#ffcccc;"></div>
<div class="a" style="left:35.5px;top:407px;width:1px;height:19px;background:#fff5f5;"></div>
<div class="a" style="left:157px;top:407px;width:1px;height:19px;background:#fff5f5;"></div>
<div class="a" style="left:234.5px;top:407px;width:1px;height:19px;background:#fff5f5;"></div>
<div class="a" style="left:511px;top:407px;width:1px;height:19px;background:#fff5f5;"></div>
<div class="a" style="left:622px;top:407px;width:1px;height:19px;background:#fff5f5;"></div>
<div class="a" style="left:732px;top:407px;width:1px;height:19px;background:#fff5f5;"></div>
<div class="a" style="left:787.5px;top:407px;width:1px;height:19px;background:#fff5f5;"></div>
<div class="a" style="left:842.5px;top:407px;width:1px;height:19px;background:#fff5f5;"></div>
<div class="a" style="left:898px;top:407px;width:1px;height:19px;background:#fff5f5;"></div>
<div class="a" style="left:1008px;top:407px;width:1px;height:19px;background:#fff5f5;"></div>
<div class="t" style="left:41.2px;top:409.40px;letter-spacing:-0.114px;">11.906122</div>
<div class="t" style="left:162.7px;top:409.40px;letter-spacing:-0.195px;">0.001</div>
<div class="t" style="left:240.2px;top:409.40px;letter-spacing:-0.106px;">BLE LL - Adv Scan Request</div>
<div class="t" style="left:516.7px;top:409.40px;letter-spacing:-0.000px;">55 82 70 8A 0D F1</div>
<div class="t" style="left:627.1px;top:409.40px;letter-spacing:0.175px;">60 AB D2 08 A9 52</div>
<div class="t" style="left:737.7px;top:409.40px;">1</div>
<div class="t" style="left:903.7px;top:409.40px;letter-spacing:0.149px;">Missing packets</div>
<div class="a" style="left:19.5px;top:426px;width:1093.5px;height:19px;background:#ffcccc;"></div>
<div class="a" style="left:35.5px;top:426px;width:1px;height:19px;background:#fff5f5;"></div>
<div class="a" style="left:157px;top:426px;width:1px;height:19px;background:#fff5f5;"></div>
<div class="a" style="left:234.5px;top:426px;width:1px;height:19px;background:#fff5f5;"></div>
<div class="a" style="left:511px;top:426px;width:1px;height:19px;background:#fff5f5;"></div>
<div class="a" style="left:622px;top:426px;width:1px;height:19px;background:#fff5f5;"></div>
<div class="a" style="left:732px;top:426px;width:1px;height:19px;background:#fff5f5;"></div>
<div class="a" style="left:787.5px;top:426px;width:1px;height:19px;background:#fff5f5;"></div>
<div class="a" style="left:842.5px;top:426px;width:1px;height:19px;background:#fff5f5;"></div>
<div class="a" style="left:898px;top:426px;width:1px;height:19px;background:#fff5f5;"></div>
<div class="a" style="left:1008px;top:426px;width:1px;height:19px;background:#fff5f5;"></div>
<div class="t" style="left:41.2px;top:428.60px;letter-spacing:-0.222px;">12.000871</div>
<div class="t" style="left:162.7px;top:428.60px;letter-spacing:-0.195px;">0.001</div>
<div class="t" style="left:240.2px;top:428.60px;letter-spacing:-0.042px;">BLE Adv - Scan Request/Response</div>
<div class="t" style="left:516.7px;top:428.60px;letter-spacing:-0.042px;">55 25 59 DF 08 41</div>
<div class="t" style="left:627.1px;top:428.60px;letter-spacing:-0.240px;">90 FD 9F C8 F0 19</div>
<div class="t" style="left:737.7px;top:428.60px;">2</div>
<div class="a" style="left:19.5px;top:445px;width:1093.5px;height:19px;background:#ffcccc;"></div>
<div class="a" style="left:35.5px;top:445px;width:1px;height:19px;background:#fff5f5;"></div>
<div class="a" style="left:157px;top:445px;width:1px;height:19px;background:#fff5f5;"></div>
<div class="a" style="left:234.5px;top:445px;width:1px;height:19px;background:#fff5f5;"></div>
<div class="a" style="left:511px;top:445px;width:1px;height:19px;background:#fff5f5;"></div>
<div class="a" style="left:622px;top:445px;width:1px;height:19px;background:#fff5f5;"></div>
<div class="a" style="left:732px;top:445px;width:1px;height:19px;background:#fff5f5;"></div>
<div class="a" style="left:787.5px;top:445px;width:1px;height:19px;background:#fff5f5;"></div>
<div class="a" style="left:842.5px;top:445px;width:1px;height:19px;background:#fff5f5;"></div>
<div class="a" style="left:898px;top:445px;width:1px;height:19px;background:#fff5f5;"></div>
<div class="a" style="left:1008px;top:445px;width:1px;height:19px;background:#fff5f5;"></div>
<div class="t" style="left:41.2px;top:447.80px;letter-spacing:-0.114px;">12.118520</div>
<div class="t" style="left:162.7px;top:447.80px;letter-spacing:-0.195px;">0.001</div>
<div class="t" style="left:240.2px;top:447.80px;letter-spacing:-0.042px;">BLE Adv - Scan Request/Response</div>
<div class="t" style="left:516.7px;top:447.80px;letter-spacing:-0.068px;">7F A7 32 2E 14 92</div>
<div class="t" style="left:627.1px;top:447.80px;letter-spacing:-0.478px;">90 FD 9F C8 EF FC</div>
<div class="t" style="left:737.7px;top:447.80px;">2</div>
<div class="a" style="left:19.5px;top:464px;width:1093.5px;height:20px;background:#ffcccc;"></div>
<div class="a" style="left:35.5px;top:464px;width:1px;height:20px;background:#fff5f5;"></div>
<div class="a" style="left:157px;top:464px;width:1px;height:20px;background:#fff5f5;"></div>
<div class="a" style="left:234.5px;top:464px;width:1px;height:20px;background:#fff5f5;"></div>
<div class="a" style="left:511px;top:464px;width:1px;height:20px;background:#fff5f5;"></div>
<div class="a" style="left:622px;top:464px;width:1px;height:20px;background:#fff5f5;"></div>
<div class="a" style="left:732px;top:464px;width:1px;height:20px;background:#fff5f5;"></div>
<div class="a" style="left:787.5px;top:464px;width:1px;height:20px;background:#fff5f5;"></div>
<div class="a" style="left:842.5px;top:464px;width:1px;height:20px;background:#fff5f5;"></div>
<div class="a" style="left:898px;top:464px;width:1px;height:20px;background:#fff5f5;"></div>
<div class="a" style="left:1008px;top:464px;width:1px;height:20px;background:#fff5f5;"></div>
<div class="t" style="left:41.2px;top:467.00px;letter-spacing:-0.222px;">12.197481</div>
<div class="t" style="left:162.7px;top:467.00px;letter-spacing:-0.195px;">0.004</div>
<div class="t" style="left:240.2px;top:467.00px;letter-spacing:-0.042px;">BLE Adv - Scan Request/Response</div>
<div class="t" style="left:516.7px;top:467.00px;letter-spacing:0.020px;">71 59 93 AC 12 50</div>
<div class="t" style="left:627.1px;top:467.00px;letter-spacing:-0.240px;">90 FD 9F C8 F0 19</div>
<div class="t" style="left:737.7px;top:467.00px;">2</div>
<div class="a" style="left:19.5px;top:484px;width:1093.5px;height:19px;background:#ffcccc;"></div>
<div class="a" style="left:35.5px;top:484px;width:1px;height:19px;background:#fff5f5;"></div>
<div class="a" style="left:157px;top:484px;width:1px;height:19px;background:#fff5f5;"></div>
<div class="a" style="left:234.5px;top:484px;width:1px;height:19px;background:#fff5f5;"></div>
<div class="a" style="left:511px;top:484px;width:1px;height:19px;background:#fff5f5;"></div>
<div class="a" style="left:622px;top:484px;width:1px;height:19px;background:#fff5f5;"></div>
<div class="a" style="left:732px;top:484px;width:1px;height:19px;background:#fff5f5;"></div>
<div class="a" style="left:787.5px;top:484px;width:1px;height:19px;background:#fff5f5;"></div>
<div class="a" style="left:842.5px;top:484px;width:1px;height:19px;background:#fff5f5;"></div>
<div class="a" style="left:898px;top:484px;width:1px;height:19px;background:#fff5f5;"></div>
<div class="a" style="left:1008px;top:484px;width:1px;height:19px;background:#fff5f5;"></div>
<div class="t" style="left:41.2px;top:486.20px;letter-spacing:-0.222px;">12.201278</div>
<div class="t" style="left:162.7px;top:486.20px;letter-spacing:-0.195px;">0.001</div>
<div class="t" style="left:240.2px;top:486.20px;letter-spacing:-0.042px;">BLE Adv - Scan Request/Response</div>
<div class="t" style="left:516.7px;top:486.20px;letter-spacing:-0.010px;">50 4A D4 8D 5B ...</div>
<div class="t" style="left:627.1px;top:486.20px;letter-spacing:-0.240px;">90 FD 9F C8 F0 19</div>
<div class="t" style="left:737.7px;top:486.20px;">2</div>
<div class="t" style="left:41.2px;top:505.40px;letter-spacing:-0.222px;">12.217315</div>
<div class="t" style="left:162.7px;top:505.40px;letter-spacing:-0.195px;">1.991</div>
<div class="t" style="left:240.2px;top:505.40px;letter-spacing:0.044px;">BT Mesh - Looking for Provisioner (Device: 53 69 ...</div>
<div class="t" style="left:516.7px;top:505.40px;letter-spacing:-0.478px;">90 FD 9F C8 EF FC</div>
<div class="t" style="left:627.1px;top:505.40px;letter-spacing:0.020px;">71 59 93 AC 12 50</div>
<div class="t" style="left:737.7px;top:505.40px;letter-spacing:-0.597px;">41</div>
<div class="a" style="left:4px;top:522px;width:1109px;height:19px;background:#d9d9d9;"></div>
<div class="t" style="left:41.2px;top:524.60px;letter-spacing:-0.222px;">12.352364</div>
<div class="t" style="left:162.7px;top:524.60px;letter-spacing:-0.195px;">0.099</div>
<div class="t" style="left:240.2px;top:524.60px;letter-spacing:-0.024px;">BLE LL Control - Feature Exchange Procedure</div>
<div class="t" style="left:516.7px;top:524.60px;letter-spacing:-0.478px;">90 FD 9F C8 EF FC</div>
<div class="t" style="left:627.1px;top:524.60px;letter-spacing:0.020px;">71 59 93 AC 12 50</div>
<div class="t" style="left:737.7px;top:524.60px;">2</div>
<div class="t" style="left:41.2px;top:543.80px;letter-spacing:-0.222px;">12.352583</div>
<div class="t" style="left:162.7px;top:543.80px;letter-spacing:-0.195px;">0.098</div>
<div class="t" style="left:240.2px;top:543.80px;letter-spacing:-0.024px;">BLE LL Control - Feature Exchange Procedure</div>
<div class="t" style="left:516.7px;top:543.80px;letter-spacing:0.020px;">71 59 93 AC 12 50</div>
<div class="t" style="left:627.1px;top:543.80px;letter-spacing:-0.478px;">90 FD 9F C8 EF FC</div>
<div class="t" style="left:737.7px;top:543.80px;">2</div>
<div class="t" style="left:41.2px;top:563.00px;letter-spacing:-0.222px;">12.399653</div>
<div class="t" style="left:162.7px;top:563.00px;letter-spacing:-0.195px;">2.803</div>
<div class="t" style="left:240.2px;top:563.00px;letter-spacing:0.044px;">BT Mesh - Looking for Provisioner (Device: 53 69 ...</div>
<div class="t" style="left:516.7px;top:563.00px;letter-spacing:-0.240px;">90 FD 9F C8 F0 19</div>
<div class="t" style="left:737.7px;top:563.00px;letter-spacing:-0.197px;">45</div>
<div class="t" style="left:903.7px;top:563.00px;letter-spacing:0.149px;">Missing packets</div>
<div class="t" style="left:41.2px;top:582.20px;letter-spacing:-0.222px;">12.498696</div>
<div class="t" style="left:162.7px;top:582.20px;letter-spacing:-0.195px;">0.098</div>
<div class="t" style="left:240.2px;top:582.20px;letter-spacing:0.098px;">BLE LL Control - Data Length Update Procedure</div>
<div class="t" style="left:516.7px;top:582.20px;letter-spacing:-0.478px;">90 FD 9F C8 EF FC</div>
<div class="t" style="left:627.1px;top:582.20px;letter-spacing:0.020px;">71 59 93 AC 12 50</div>
<div class="t" style="left:737.7px;top:582.20px;">2</div>
<div class="t" style="left:41.2px;top:601.40px;letter-spacing:-0.222px;">12.547061</div>
<div class="t" style="left:162.7px;top:601.40px;letter-spacing:-0.195px;">0.050</div>
<div class="t" style="left:240.2px;top:601.40px;letter-spacing:-0.015px;">BLE LL Control - Version Exchange Procedure</div>
<div class="t" style="left:516.7px;top:601.40px;letter-spacing:0.020px;">71 59 93 AC 12 50</div>
<div class="t" style="left:627.1px;top:601.40px;letter-spacing:-0.478px;">90 FD 9F C8 EF FC</div>
<div class="t" style="left:737.7px;top:601.40px;">2</div>
<div class="t" style="left:41.2px;top:620.60px;letter-spacing:-0.222px;">12.644565</div>
<div class="t" style="left:162.7px;top:620.60px;letter-spacing:-0.195px;">0.001</div>
<div class="t" style="left:240.2px;top:620.60px;letter-spacing:0.136px;">BLE LL Control - Connection Update procedure</div>
<div class="t" style="left:516.7px;top:620.60px;letter-spacing:0.020px;">71 59 93 AC 12 50</div>
<div class="t" style="left:627.1px;top:620.60px;letter-spacing:-0.478px;">90 FD 9F C8 EF FC</div>
<div class="t" style="left:737.7px;top:620.60px;">1</div>
<div class="a" style="left:19.5px;top:637px;width:1093.5px;height:19px;background:#ccffcc;"></div>
<div class="a" style="left:35.5px;top:637px;width:1px;height:19px;background:#f5fff5;"></div>
<div class="a" style="left:157px;top:637px;width:1px;height:19px;background:#f5fff5;"></div>
<div class="a" style="left:234.5px;top:637px;width:1px;height:19px;background:#f5fff5;"></div>
<div class="a" style="left:511px;top:637px;width:1px;height:19px;background:#f5fff5;"></div>
<div class="a" style="left:622px;top:637px;width:1px;height:19px;background:#f5fff5;"></div>
<div class="a" style="left:732px;top:637px;width:1px;height:19px;background:#f5fff5;"></div>
<div class="a" style="left:787.5px;top:637px;width:1px;height:19px;background:#f5fff5;"></div>
<div class="a" style="left:842.5px;top:637px;width:1px;height:19px;background:#f5fff5;"></div>
<div class="a" style="left:898px;top:637px;width:1px;height:19px;background:#f5fff5;"></div>
<div class="a" style="left:1008px;top:637px;width:1px;height:19px;background:#f5fff5;"></div>
<div class="t" style="left:41.2px;top:639.80px;letter-spacing:-0.222px;">12.693320</div>
<div class="t" style="left:162.7px;top:639.80px;letter-spacing:-0.195px;">0.050</div>
<div class="t" style="left:240.2px;top:639.80px;letter-spacing:-0.045px;">BLE ATT - Read By Group Type Request/Response</div>
<div class="t" style="left:516.7px;top:639.80px;letter-spacing:0.020px;">71 59 93 AC 12 50</div>
<div class="t" style="left:627.1px;top:639.80px;letter-spacing:-0.478px;">90 FD 9F C8 EF FC</div>
<div class="t" style="left:737.7px;top:639.80px;">2</div>
<div class="a" style="left:19.5px;top:656px;width:1093.5px;height:20px;background:#ffcccc;"></div>
<div class="a" style="left:35.5px;top:656px;width:1px;height:20px;background:#fff5f5;"></div>
<div class="a" style="left:157px;top:656px;width:1px;height:20px;background:#fff5f5;"></div>
<div class="a" style="left:234.5px;top:656px;width:1px;height:20px;background:#fff5f5;"></div>
<div class="a" style="left:511px;top:656px;width:1px;height:20px;background:#fff5f5;"></div>
<div class="a" style="left:622px;top:656px;width:1px;height:20px;background:#fff5f5;"></div>
<div class="a" style="left:732px;top:656px;width:1px;height:20px;background:#fff5f5;"></div>
<div class="a" style="left:787.5px;top:656px;width:1px;height:20px;background:#fff5f5;"></div>
<div class="a" style="left:842.5px;top:656px;width:1px;height:20px;background:#fff5f5;"></div>
<div class="a" style="left:898px;top:656px;width:1px;height:20px;background:#fff5f5;"></div>
<div class="a" style="left:1008px;top:656px;width:1px;height:20px;background:#fff5f5;"></div>
<div class="t" style="left:41.2px;top:659.00px;letter-spacing:-0.222px;">12.739742</div>
<div class="t" style="left:162.7px;top:659.00px;letter-spacing:-0.195px;">0.001</div>
<div class="t" style="left:240.2px;top:659.00px;letter-spacing:-0.106px;">BLE LL - Adv Scan Request</div>
<div class="t" style="left:516.7px;top:659.00px;letter-spacing:-0.010px;">50 4A D4 8D 5B ...</div>
<div class="t" style="left:627.1px;top:659.00px;letter-spacing:-0.186px;">18 B4 30 E1 E7 6D</div>
<div class="t" style="left:737.7px;top:659.00px;">1</div>
<div class="t" style="left:903.7px;top:659.00px;letter-spacing:0.149px;">Missing packets</div>
<svg class="a" style="left:7px;top:505.19999999999993px" width="14" height="14" viewBox="0 0 14 14"><circle cx="5" cy="8.6" r="4.3" fill="#fff" stroke="#4a7ab8" stroke-width="0.9"/><circle cx="9" cy="5" r="3.6" fill="#fff" stroke="#4a7ab8" stroke-width="0.9"/><circle cx="5" cy="8.6" r="4.3" fill="none" stroke="#4a7ab8" stroke-width="0.9"/><path d="M5 6.2V9.6M3.6 8.4L5 9.8 6.4 8.4M9 3V5.6M8 4.8L9 5.8 10 4.8" stroke="#4a7ab8" stroke-width="0.7" fill="none"/></svg>
<div class="a" style="left:1113px;top:135px;width:18px;height:539px;background:#f0f0f0;"></div>
<svg class="a" style="left:1117.4px;top:141.3px" width="8" height="6" viewBox="0 0 8 6"><path d="M0.9 4.9L4 1.5 7.1 4.9" fill="none" stroke="#4d4d4d" stroke-width="1.5"/></svg>
<svg class="a" style="left:1117.5px;top:663.0px" width="8" height="6" viewBox="0 0 8 6"><path d="M0.9 1.1L4 4.5 7.1 1.1" fill="none" stroke="#4d4d4d" stroke-width="1.5"/></svg>
<div class="a" style="left:1114px;top:179px;width:15px;height:17px;background:#cdcdcd;"></div>
<div class="a" style="left:4px;top:674px;width:1109px;height:18px;background:#f0f0f0;"></div>
<div class="a" style="left:20px;top:676px;width:1071px;height:15px;background:#cdcdcd;"></div>
<svg class="a" style="left:8.2px;top:679.0px" width="6" height="8" viewBox="0 0 6 8"><path d="M4.9 0.9L1.5 4 4.9 7.1" fill="none" stroke="#4d4d4d" stroke-width="1.5"/></svg>
<svg class="a" style="left:1101.6px;top:679.0px" width="6" height="8" viewBox="0 0 6 8"><path d="M1.1 0.9L4.5 4 1.1 7.1" fill="none" stroke="#4d4d4d" stroke-width="1.5"/></svg>
<div class="a" style="left:1113px;top:674px;width:18px;height:18px;background:#f0f0f0;"></div>
<div class="a" style="left:2px;top:692px;width:1130px;height:1px;background:#8a8f98;"></div>
<div class="a" style="left:2px;top:698px;width:1129px;height:18px;background:#f0f0f0;"></div>
<div class="a" style="left:2px;top:698px;width:1129px;height:1px;background:#fafafa;"></div>
<div class="a" style="left:1106px;top:700px;width:24px;height:15px;background:#cddcee;"></div>
<div class="a" style="left:4px;top:699px;width:8px;height:16px;background:#c5d5ea;"></div>
<div class="t" style="left:11.3px;top:700.60px;letter-spacing:-0.234px;">Events</div>
<div class="t" style="left:61.4px;top:700.60px;letter-spacing:0.024px;">total:27,086 shown:26,500</div>
<div class="t" style="left:212.7px;top:700.60px;letter-spacing:0.165px;">Decoders: Bluetooth Low Energy, Default Profile</div>
<svg class="a" style="left:1117px;top:701.6px" width="9" height="9" viewBox="0 0 9 9"><rect x="0.6" y="0.6" width="7.2" height="7.2" fill="#fff" stroke="#1c1c1c" stroke-width="1"/><rect x="0.1" y="0.1" width="8.2" height="1.3" fill="#1c1c1c"/></svg>
<div class="a" style="left:2px;top:716px;width:1129px;height:315px;background:#ffffff;"></div>
<div class="a" style="left:2px;top:716px;width:1130px;height:1px;background:#7c828b;"></div>
<div class="a" style="left:4px;top:717px;width:1127px;height:1px;background:#c9ccd1;"></div>
<div class="a" style="left:2px;top:716px;width:1px;height:315px;background:#828790;"></div>
<div class="a" style="left:1131px;top:716px;width:1px;height:315px;background:#9aa3b0;"></div>
<div class="a" style="left:35px;top:739px;width:1px;height:292px;background:#f2f5fa;"></div>
<div class="a" style="left:35px;top:718px;width:1px;height:21px;background:#e5e5e5;"></div>
<div class="a" style="left:146.5px;top:739px;width:1px;height:292px;background:#f2f5fa;"></div>
<div class="a" style="left:146.5px;top:718px;width:1px;height:21px;background:#e5e5e5;"></div>
<div class="a" style="left:256.5px;top:739px;width:1px;height:292px;background:#f2f5fa;"></div>
<div class="a" style="left:256.5px;top:718px;width:1px;height:21px;background:#e5e5e5;"></div>
<div class="a" style="left:589.5px;top:739px;width:1px;height:292px;background:#f2f5fa;"></div>
<div class="a" style="left:589.5px;top:718px;width:1px;height:21px;background:#e5e5e5;"></div>
<div class="a" style="left:688.5px;top:739px;width:1px;height:292px;background:#f2f5fa;"></div>
<div class="a" style="left:688.5px;top:718px;width:1px;height:21px;background:#e5e5e5;"></div>
<div class="a" style="left:788px;top:739px;width:1px;height:292px;background:#f2f5fa;"></div>
<div class="a" style="left:788px;top:718px;width:1px;height:21px;background:#e5e5e5;"></div>
<div class="a" style="left:909px;top:739px;width:1px;height:292px;background:#f2f5fa;"></div>
<div class="a" style="left:909px;top:718px;width:1px;height:21px;background:#e5e5e5;"></div>
<div class="a" style="left:1030.5px;top:739px;width:1px;height:292px;background:#f2f5fa;"></div>
<div class="a" style="left:1030.5px;top:718px;width:1px;height:21px;background:#e5e5e5;"></div>
<div class="t" style="left:41.0px;top:722.60px;letter-spacing:0.453px;">Time</div>
<div class="t" style="left:151.3px;top:722.60px;letter-spacing:0.021px;">Type</div>
<div class="t" style="left:261.7px;top:722.60px;letter-spacing:0.133px;">Summary</div>
<div class="t" style="left:594.2px;top:722.60px;letter-spacing:-0.083px;">MAC Src</div>
<div class="t" style="left:693.0px;top:722.60px;letter-spacing:0.199px;">MAC Dest</div>
<div class="t" style="left:792.6px;top:722.60px;letter-spacing:0.061px;">Event error status</div>
<div class="t" style="left:914.1px;top:722.60px;letter-spacing:0.107px;">Event warning status</div>
<div class="t" style="left:41.0px;top:742.00px;letter-spacing:-0.222px;">12.318127</div>
<div class="t" style="left:151.3px;top:742.00px;letter-spacing:-0.234px;">Packet</div>
<div class="t" style="left:261.7px;top:742.00px;letter-spacing:0.131px;">BLE LL - Adv Indication</div>
<div class="t" style="left:594.2px;top:742.00px;letter-spacing:-0.453px;">90 FD 9F C8 EF ...</div>
<div class="a" style="left:4px;top:759px;width:1027px;height:19px;background:#d9d9d9;"></div>
<div class="t" style="left:41.0px;top:761.20px;letter-spacing:-0.222px;">12.318554</div>
<div class="t" style="left:151.3px;top:761.20px;letter-spacing:-0.234px;">Packet</div>
<div class="t" style="left:261.7px;top:761.20px;letter-spacing:0.095px;">BLE LL - Adv Connect Indication</div>
<div class="t" style="left:594.2px;top:761.20px;letter-spacing:-0.098px;">71 59 93 AC 12...</div>
<div class="t" style="left:693.0px;top:761.20px;letter-spacing:-0.453px;">90 FD 9F C8 EF ...</div>
<div class="t" style="left:41.0px;top:780.40px;letter-spacing:-0.222px;">12.338022</div>
<div class="t" style="left:151.3px;top:780.40px;letter-spacing:-0.234px;">Packet</div>
<div class="t" style="left:261.7px;top:780.40px;letter-spacing:0.131px;">BLE LL - Adv Indication</div>
<div class="t" style="left:594.2px;top:780.40px;letter-spacing:-0.122px;">4A EB 84 55 D...</div>
<div class="t" style="left:41.0px;top:799.60px;letter-spacing:-0.222px;">12.346733</div>
<div class="t" style="left:151.3px;top:799.60px;letter-spacing:-0.234px;">Packet</div>
<div class="t" style="left:261.7px;top:799.60px;letter-spacing:0.131px;">BLE LL - Adv Indication</div>
<div class="t" style="left:594.2px;top:799.60px;letter-spacing:-0.090px;">75 D2 69 28 6...</div>
<div class="t" style="left:41.0px;top:818.80px;letter-spacing:-0.222px;">12.347475</div>
<div class="t" style="left:151.3px;top:818.80px;letter-spacing:-0.234px;">Packet</div>
<div class="t" style="left:261.7px;top:818.80px;letter-spacing:-0.144px;">BLE LL - Adv Scan Response</div>
<div class="t" style="left:594.2px;top:818.80px;letter-spacing:-0.090px;">75 D2 69 28 6...</div>
<div class="t" style="left:41.0px;top:838.00px;letter-spacing:-0.222px;">12.352051</div>
<div class="t" style="left:151.3px;top:838.00px;letter-spacing:-0.234px;">Packet</div>
<div class="t" style="left:261.7px;top:838.00px;letter-spacing:-0.153px;">BLE LL - Empty PDU</div>
<div class="t" style="left:594.2px;top:838.00px;letter-spacing:-0.098px;">71 59 93 AC 12...</div>
<div class="t" style="left:693.0px;top:838.00px;letter-spacing:-0.453px;">90 FD 9F C8 EF ...</div>
<div class="t" style="left:41.0px;top:857.20px;letter-spacing:-0.222px;">12.352364</div>
<div class="t" style="left:151.3px;top:857.20px;letter-spacing:-0.234px;">Packet</div>
<div class="t" style="left:261.7px;top:857.20px;letter-spacing:-0.099px;">BLE LL Control: Slave Feature Request</div>
<div class="t" style="left:594.2px;top:857.20px;letter-spacing:-0.453px;">90 FD 9F C8 EF ...</div>
<div class="t" style="left:693.0px;top:857.20px;letter-spacing:-0.098px;">71 59 93 AC 12...</div>
<div class="t" style="left:41.0px;top:876.40px;letter-spacing:-0.222px;">12.352583</div>
<div class="t" style="left:151.3px;top:876.40px;letter-spacing:-0.234px;">Packet</div>
<div class="t" style="left:261.7px;top:876.40px;letter-spacing:-0.087px;">BLE LL Control: Feature Request</div>
<div class="t" style="left:594.2px;top:876.40px;letter-spacing:-0.098px;">71 59 93 AC 12...</div>
<div class="t" style="left:693.0px;top:876.40px;letter-spacing:-0.453px;">90 FD 9F C8 EF ...</div>
<div class="t" style="left:41.0px;top:895.60px;letter-spacing:-0.222px;">12.352970</div>
<div class="t" style="left:151.3px;top:895.60px;letter-spacing:-0.234px;">Packet</div>
<div class="t" style="left:261.7px;top:895.60px;letter-spacing:-0.099px;">BLE LL Control: Slave Feature Request</div>
<div class="t" style="left:594.2px;top:895.60px;letter-spacing:-0.453px;">90 FD 9F C8 EF ...</div>
<div class="t" style="left:693.0px;top:895.60px;letter-spacing:-0.098px;">71 59 93 AC 12...</div>
<div class="t" style="left:914.1px;top:895.60px;letter-spacing:-0.057px;">Retransmitted Pack...</div>
<div class="t" style="left:41.0px;top:914.80px;letter-spacing:-0.222px;">12.353788</div>
<div class="t" style="left:151.3px;top:914.80px;letter-spacing:-0.234px;">Packet</div>
<div class="t" style="left:261.7px;top:914.80px;letter-spacing:0.190px;">Unprovisioned Device Beacon</div>
<div class="t" style="left:594.2px;top:914.80px;letter-spacing:-0.453px;">90 FD 9F C8 EF ...</div>
<div class="t" style="left:41.0px;top:934.00px;letter-spacing:-0.222px;">12.354323</div>
<div class="t" style="left:151.3px;top:934.00px;letter-spacing:-0.234px;">Packet</div>
<div class="t" style="left:261.7px;top:934.00px;letter-spacing:0.190px;">Unprovisioned Device Beacon</div>
<div class="t" style="left:594.2px;top:934.00px;letter-spacing:-0.453px;">90 FD 9F C8 EF ...</div>
<div class="t" style="left:41.0px;top:953.20px;letter-spacing:-0.222px;">12.354828</div>
<div class="t" style="left:151.3px;top:953.20px;letter-spacing:-0.234px;">Packet</div>
<div class="t" style="left:261.7px;top:953.20px;letter-spacing:0.190px;">Unprovisioned Device Beacon</div>
<div class="t" style="left:594.2px;top:953.20px;letter-spacing:-0.453px;">90 FD 9F C8 EF ...</div>
<div class="t" style="left:41.0px;top:972.40px;letter-spacing:-0.222px;">12.362056</div>
<div class="t" style="left:151.3px;top:972.40px;letter-spacing:-0.234px;">Packet</div>
<div class="t" style="left:261.7px;top:972.40px;letter-spacing:0.131px;">BLE LL - Adv Indication</div>
<div class="t" style="left:594.2px;top:972.40px;letter-spacing:-0.117px;">4B 76 31 93 70 ...</div>
<div class="t" style="left:41.0px;top:991.60px;letter-spacing:-0.222px;">12.399653</div>
<div class="t" style="left:151.3px;top:991.60px;letter-spacing:-0.234px;">Packet</div>
<div class="t" style="left:261.7px;top:991.60px;letter-spacing:0.190px;">Unprovisioned Device Beacon</div>
<div class="t" style="left:594.2px;top:991.60px;letter-spacing:-0.378px;">90 FD 9F C8 F0 ...</div>
<div class="t" style="left:41.0px;top:1010.80px;letter-spacing:-0.222px;">12.400188</div>
<div class="t" style="left:151.3px;top:1010.80px;letter-spacing:-0.234px;">Packet</div>
<div class="t" style="left:261.7px;top:1010.80px;letter-spacing:0.190px;">Unprovisioned Device Beacon</div>
<div class="t" style="left:594.2px;top:1010.80px;letter-spacing:-0.378px;">90 FD 9F C8 F0 ...</div>
<svg class="a" style="left:7px;top:741.8px" width="14" height="14" viewBox="0 0 14 14"><circle cx="5" cy="8.6" r="4.3" fill="#fff" stroke="#4a7ab8" stroke-width="0.9"/><circle cx="9" cy="5" r="3.6" fill="#fff" stroke="#4a7ab8" stroke-width="0.9"/><circle cx="5" cy="8.6" r="4.3" fill="none" stroke="#4a7ab8" stroke-width="0.9"/><path d="M5 6.2V9.6M3.6 8.4L5 9.8 6.4 8.4M9 3V5.6M8 4.8L9 5.8 10 4.8" stroke="#4a7ab8" stroke-width="0.7" fill="none"/></svg>
<svg class="a" style="left:7px;top:763.0px" width="12" height="10" viewBox="0 0 12 10"><path d="M11.5 1.2H1V8.8H11.5" fill="none" stroke="#18a0be" stroke-width="2.2"/></svg>
<div class="a" style="left:1113px;top:717px;width:18px;height:314px;background:#f0f0f0;"></div>
<svg class="a" style="left:1117.4px;top:723.8px" width="8" height="6" viewBox="0 0 8 6"><path d="M0.9 4.9L4 1.5 7.1 4.9" fill="none" stroke="#4d4d4d" stroke-width="1.5"/></svg>
<div class="a" style="left:1114px;top:751px;width:15px;height:17px;background:#cdcdcd;"></div>
<div class="a" style="left:1138px;top:93px;width:390px;height:1px;background:#bdbfc3;"></div>
<div class="a" style="left:1138px;top:94px;width:390px;height:17px;background:#f0f0f0;"></div>
<div class="a" style="left:1138px;top:94px;width:1px;height:18px;background:#b4b8be;"></div>
<div class="a" style="left:1139px;top:94px;width:1px;height:17px;background:#fafafa;"></div>
<div class="a" style="left:1140px;top:95px;width:1px;height:15px;background:#d6e2f1;"></div>
<div class="a" style="left:1156px;top:95px;width:6px;height:15px;background:#c9d8ec;"></div>
<div class="a" style="left:1507px;top:95px;width:21px;height:16px;background:#cddcee;"></div>
<div class="a" style="left:1138px;top:111px;width:390px;height:1px;background:#fdfdfd;"></div>
<svg class="a" style="left:1142px;top:94.5px" width="13" height="16" viewBox="0 0 13 16"><path d="M7.8 10.6L11.3 14.8" stroke="#a2a2a2" stroke-width="1.2"/><ellipse cx="4.6" cy="3.2" rx="2.6" ry="2.2" transform="rotate(-20 4.6 3.2)" fill="#917375"/><path d="M3.4 4.4L6.6 3.6 8.2 6.6 4.6 7.6Z" fill="#8a6e70"/><ellipse cx="6.4" cy="8.4" rx="4.3" ry="2.5" transform="rotate(-32 6.4 8.4)" fill="#917375"/><path d="M2.2 9.2L3.4 11.4 6.4 11.2 8.4 10.2 5 10.4Z" fill="#7e7476"/></svg>
<div class="t" style="left:1161.9px;top:95.50px;letter-spacing:0.162px;">Event Detail</div>
<svg class="a" style="left:1517.3px;top:99.7px" width="9.6" height="6" viewBox="0 0 9.6 6"><path d="M0.8 0.8H8.8L4.8 5Z" fill="#fff" stroke="#151515" stroke-width="1.1"/></svg>
<div class="a" style="left:1138px;top:112px;width:390px;height:795px;background:#ffffff;"></div>
<div class="a" style="left:1138px;top:112px;width:390px;height:1px;background:#7b818b;"></div>
<div class="a" style="left:1139px;top:113px;width:389px;height:1px;background:#d9dbde;"></div>
<div class="a" style="left:1138px;top:112px;width:1px;height:795px;background:#80868f;"></div>
<div class="a" style="left:1138px;top:906px;width:390px;height:1px;background:#9aa3b0;"></div>
<div class="a" style="left:1140px;top:131.0px;width:388px;height:1px;background:#ececec;"></div>
<div class="a" style="left:1140px;top:149.5px;width:388px;height:1px;background:#ececec;"></div>
<div class="a" style="left:1140px;top:167.5px;width:388px;height:1px;background:#ececec;"></div>
<div class="a" style="left:1140px;top:186.0px;width:388px;height:1px;background:#ececec;"></div>
<div class="a" style="left:1140px;top:204.5px;width:388px;height:1px;background:#ececec;"></div>
<div class="a" style="left:1140px;top:223.0px;width:388px;height:1px;background:#ececec;"></div>
<div class="a" style="left:1140px;top:241.5px;width:388px;height:1px;background:#ececec;"></div>
<div class="a" style="left:1140px;top:259.5px;width:388px;height:1px;background:#ececec;"></div>
<div class="a" style="left:1140px;top:278.0px;width:388px;height:1px;background:#ececec;"></div>
<div class="a" style="left:1140px;top:296.5px;width:388px;height:1px;background:#ececec;"></div>
<div class="a" style="left:1140px;top:315.0px;width:388px;height:1px;background:#ececec;"></div>
<div class="a" style="left:1140px;top:333.5px;width:388px;height:1px;background:#ececec;"></div>
<div class="a" style="left:1140px;top:351.5px;width:388px;height:1px;background:#ececec;"></div>
<div class="a" style="left:1140px;top:370.0px;width:388px;height:1px;background:#ececec;"></div>
<div class="a" style="left:1140px;top:388.5px;width:388px;height:1px;background:#ececec;"></div>
<div class="a" style="left:1140px;top:407.0px;width:388px;height:1px;background:#ececec;"></div>
<div class="a" style="left:1140px;top:425.5px;width:388px;height:1px;background:#ececec;"></div>
<div class="a" style="left:1140px;top:443.5px;width:388px;height:1px;background:#ececec;"></div>
<div class="a" style="left:1140px;top:462.0px;width:388px;height:1px;background:#ececec;"></div>
<div class="a" style="left:1140px;top:480.5px;width:388px;height:1px;background:#ececec;"></div>
<div class="a" style="left:1140px;top:499.0px;width:388px;height:1px;background:#ececec;"></div>
<div class="a" style="left:1140px;top:517.5px;width:388px;height:1px;background:#ececec;"></div>
<div class="a" style="left:1140px;top:535.5px;width:388px;height:1px;background:#ececec;"></div>
<div class="a" style="left:1140px;top:554.0px;width:388px;height:1px;background:#ececec;"></div>
<div class="a" style="left:1140px;top:572.5px;width:388px;height:1px;background:#ececec;"></div>
<div class="a" style="left:1140px;top:591.0px;width:388px;height:1px;background:#ececec;"></div>
<div class="a" style="left:1140px;top:609.5px;width:388px;height:1px;background:#ececec;"></div>
<div class="a" style="left:1140px;top:627.5px;width:388px;height:1px;background:#ececec;"></div>
<div class="a" style="left:1140px;top:646.0px;width:388px;height:1px;background:#ececec;"></div>
<div class="a" style="left:1140px;top:664.5px;width:388px;height:1px;background:#ececec;"></div>
<div class="a" style="left:1140px;top:683.0px;width:388px;height:1px;background:#ececec;"></div>
<div class="a" style="left:1140px;top:701.5px;width:388px;height:1px;background:#ececec;"></div>
<div class="a" style="left:1140px;top:719.5px;width:388px;height:1px;background:#ececec;"></div>
<div class="a" style="left:1140px;top:738.0px;width:388px;height:1px;background:#ececec;"></div>
<div class="a" style="left:1140px;top:756.5px;width:388px;height:1px;background:#ececec;"></div>
<div class="a" style="left:1140px;top:775.0px;width:388px;height:1px;background:#ececec;"></div>
<div class="a" style="left:1140px;top:793.5px;width:388px;height:1px;background:#ececec;"></div>
<div class="a" style="left:1140px;top:811.5px;width:388px;height:1px;background:#ececec;"></div>
<div class="a" style="left:1140px;top:830.0px;width:388px;height:1px;background:#ececec;"></div>
<div class="a" style="left:1140px;top:848.5px;width:388px;height:1px;background:#ececec;"></div>
<div class="a" style="left:1140px;top:867.0px;width:388px;height:1px;background:#ececec;"></div>
<div class="a" style="left:1140px;top:885.5px;width:388px;height:1px;background:#ececec;"></div>
<div class="a" style="left:1140px;top:903.5px;width:388px;height:1px;background:#ececec;"></div>
<div class="t" style="left:1159.4px;top:115.80px;letter-spacing:0.148px;">BLE Advertisement Header [36 bytes]</div>
<div class="t" style="left:1175.4px;top:134.20px;letter-spacing:0.146px;">Advertisement Header: 0x4522</div>
<div class="t" style="left:1191.4px;top:152.60px;letter-spacing:0.016px;">Rx Address: Public (0)</div>
<div class="t" style="left:1191.4px;top:171.00px;letter-spacing:0.022px;">Tx Address: Random (1)</div>
<div class="t" style="left:1191.4px;top:189.40px;letter-spacing:0.082px;">Ch Sel: LE Channel Selection Algorithm #1 (0)</div>
<div class="t" style="left:1191.4px;top:207.80px;letter-spacing:0.132px;">PDU Type: Adv Connect Indication (5)</div>
<div class="t" style="left:1191.4px;top:226.20px;letter-spacing:0.017px;">Length: 0x22</div>
<div class="t" style="left:1175.4px;top:244.60px;letter-spacing:0.131px;">Initiator Address: 71 59 93 AC 12 50</div>
<div class="t" style="left:1175.4px;top:263.00px;letter-spacing:-0.165px;">Advertiser Address: 90 FD 9F C8 EF FC</div>
<div class="t" style="left:1191.4px;top:281.40px;letter-spacing:-0.037px;">Company Id: 0x90FD9F</div>
<div class="t" style="left:1191.4px;top:299.80px;letter-spacing:-0.116px;">Company Assigned Id: 0xC8EFFC</div>
<div class="t" style="left:1175.4px;top:318.20px;letter-spacing:-0.057px;">Access Address: 50 65 4D 9C</div>
<div class="t" style="left:1175.4px;top:336.60px;letter-spacing:0.019px;">CRC Initialization Value: 0xDF9DEA</div>
<div class="t" style="left:1175.4px;top:355.00px;letter-spacing:0.044px;">Transmit Window Size: 3.75 ms (0x03)</div>
<div class="t" style="left:1175.4px;top:373.40px;letter-spacing:0.104px;">Transmit Window Offset: 31.25 ms (0x0019)</div>
<div class="t" style="left:1175.4px;top:391.80px;letter-spacing:0.060px;">Connection Interval: 48.75 ms (0x0027)</div>
<div class="t" style="left:1175.4px;top:410.20px;letter-spacing:0.053px;">Connection Latency: 0x0000</div>
<div class="t" style="left:1175.4px;top:428.60px;letter-spacing:0.097px;">Connection Supervision Timeout: 20000.0 ms (0x07D0)</div>
<div class="t" style="left:1175.4px;top:447.00px;letter-spacing:-0.450px;">Channel Map: 1F FF FF FF FF</div>
<div class="t" style="left:1175.4px;top:465.40px;letter-spacing:0.014px;">Hop Sca: 0x26</div>
<div class="t" style="left:1191.4px;top:483.80px;letter-spacing:0.136px;">Sleep clock Accuracy(SCA): 151 ppm to 250 ppm (1)</div>
<div class="t" style="left:1191.4px;top:502.20px;letter-spacing:0.186px;">Hop Interval: 0x06</div>
<div class="t" style="left:1159.4px;top:520.60px;letter-spacing:0.051px;">Radio Info EFR32 [12 bytes]</div>
<svg class="a" style="left:1145.2px;top:120.6px" width="9" height="6" viewBox="0 0 9 6"><path d="M0.7 0.8L4.5 4.7 8.3 0.8" fill="none" stroke="#404040" stroke-width="1.4"/></svg>
<svg class="a" style="left:1147px;top:524.1px" width="6.4" height="9.4" viewBox="0 0 6.4 9.4"><path d="M1 0.9L5 4.7 1 8.5" fill="none" stroke="#9c9c9c" stroke-width="1.5"/></svg>
<div class="a" style="left:1138px;top:912px;width:390px;height:19px;background:#cbdaed;"></div>
<div class="a" style="left:1138px;top:912px;width:390px;height:1px;background:#c9ced6;"></div>
<div class="a" style="left:1138px;top:912px;width:1px;height:19px;background:#9aa1ab;"></div>
<div class="a" style="left:1139px;top:913px;width:389px;height:1px;background:#f6f8fb;"></div>
<div class="a" style="left:1139px;top:913px;width:1px;height:17px;background:#f6f8fb;"></div>
<div class="a" style="left:1138px;top:930px;width:390px;height:1px;background:#e2e2e2;"></div>
<div class="t" style="left:1147.6px;top:915.20px;letter-spacing:0.256px;">Hex Dump [49 bytes]</div>
<svg class="a" style="left:1517.3px;top:918.8px" width="9.6" height="6" viewBox="0 0 9.6 6"><path d="M0.8 0.8H8.8L4.8 5Z" fill="#fff" stroke="#151515" stroke-width="1.1"/></svg>
<div class="a" style="left:1138px;top:931px;width:390px;height:100px;background:#ffffff;"></div>
<div class="hx" style="left:1137.8px;top:932.7px"><span class="k">F8</span><span class="g"> 45 22 50 12 AC 93 59 71 FC EF</span></div>
<div class="hx" style="left:1417.8px;top:932.7px"><span class="k">.</span><span class="g">E"P...Yq..</span></div>
<div class="hx" style="left:1137.8px;top:945.5px"><span class="g">C8 9F FD 90 9C 4D 65 50 EA 9D DF</span></div>
<div class="hx" style="left:1417.8px;top:945.5px"><span class="g">.....MeP...</span></div>
<div class="hx" style="left:1137.8px;top:958.3px"><span class="g">03 19 00 27 00 00 00 D0 07 FF FF</span></div>
<div class="hx" style="left:1417.8px;top:958.3px"><span class="g">...'.......</span></div>
<div class="hx" style="left:1137.8px;top:971.1px"><span class="g">FF FF 1F 26</span><span class="b"> 02 C2 78 F9 F1 D6 BE</span></div>
<div class="hx" style="left:1417.8px;top:971.1px"><span class="g">...&amp;</span><span class="b">..x....</span></div>
<div class="hx" style="left:1137.8px;top:983.9px"><span class="b">89 8E 0C 03 68</span></div>
<div class="hx" style="left:1417.8px;top:983.9px"><span class="b">....h</span></div>
</body></html>
